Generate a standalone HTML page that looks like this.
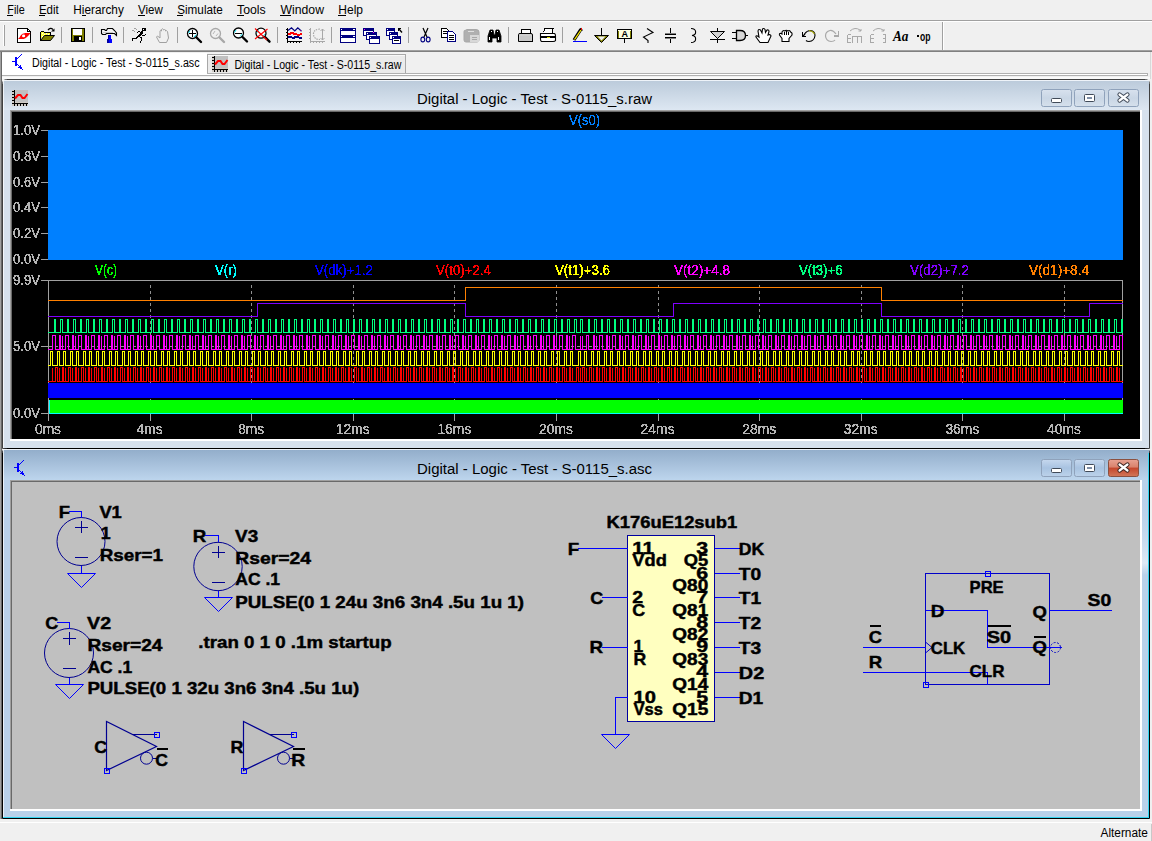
<!DOCTYPE html>
<html><head><meta charset="utf-8"><title>LTspice</title>
<style>html,body{margin:0;padding:0;width:1152px;height:841px;overflow:hidden;background:#f0f0f0} svg{display:block} text{font-family:"Liberation Sans",sans-serif}</style>
</head><body>
<svg width="1152" height="841" viewBox="0 0 1152 841" font-family="Liberation Sans, sans-serif" shape-rendering="crispEdges">
<defs>
<linearGradient id="tbInact" x1="0" y1="0" x2="0" y2="1"><stop offset="0" stop-color="#bccbdb"/><stop offset="1" stop-color="#dde7f2"/></linearGradient>
<linearGradient id="tbAct" x1="0" y1="0" x2="0" y2="1"><stop offset="0" stop-color="#93aecb"/><stop offset="1" stop-color="#bdd5ed"/></linearGradient>
<linearGradient id="btnInact" x1="0" y1="0" x2="0" y2="1"><stop offset="0" stop-color="#d8e2ee"/><stop offset="0.5" stop-color="#c9d6e5"/><stop offset="1" stop-color="#d5e0ec"/></linearGradient>
<linearGradient id="btnAct" x1="0" y1="0" x2="0" y2="1"><stop offset="0" stop-color="#c6d8ee"/><stop offset="0.5" stop-color="#a8c3e1"/><stop offset="1" stop-color="#bcd2ea"/></linearGradient>
<linearGradient id="btnClose" x1="0" y1="0" x2="0" y2="1"><stop offset="0" stop-color="#e8a292"/><stop offset="0.45" stop-color="#d9826c"/><stop offset="0.5" stop-color="#c5462c"/><stop offset="1" stop-color="#d2785a"/></linearGradient>
<filter id="crisp" x="-5%" y="-20%" width="110%" height="140%" color-interpolation-filters="sRGB"><feComponentTransfer><feFuncA type="discrete" tableValues="0 0 0 1 1 1"/></feComponentTransfer></filter>
<linearGradient id="streak" x1="0" y1="0" x2="0" y2="1"><stop offset="0" stop-color="#b9d1ea" stop-opacity="0"/><stop offset="0.85" stop-color="#dde9f5" stop-opacity="1"/><stop offset="1" stop-color="#dde9f5" stop-opacity="0"/></linearGradient>
</defs>
<rect x="0" y="0" width="1152" height="841" fill="#f0f0f0"/>
<text x="7.3" y="14" font-size="12" fill="#000" textLength="17.4" lengthAdjust="spacingAndGlyphs" >File</text>
<text x="38.9" y="14" font-size="12" fill="#000" textLength="19.8" lengthAdjust="spacingAndGlyphs" >Edit</text>
<text x="73.3" y="14" font-size="12" fill="#000" textLength="50.5" lengthAdjust="spacingAndGlyphs" >Hierarchy</text>
<text x="138" y="14" font-size="12" fill="#000" textLength="24.7" lengthAdjust="spacingAndGlyphs" >View</text>
<text x="177.2" y="14" font-size="12" fill="#000" textLength="45.6" lengthAdjust="spacingAndGlyphs" >Simulate</text>
<text x="237" y="14" font-size="12" fill="#000" textLength="28.7" lengthAdjust="spacingAndGlyphs" >Tools</text>
<text x="280.5" y="14" font-size="12" fill="#000" textLength="43.5" lengthAdjust="spacingAndGlyphs" >Window</text>
<text x="338.3" y="14" font-size="12" fill="#000" textLength="24.7" lengthAdjust="spacingAndGlyphs" >Help</text>
<rect x="7" y="15" width="6" height="1" fill="#000"/>
<rect x="39" y="15" width="6" height="1" fill="#000"/>
<rect x="82" y="15" width="4" height="1" fill="#000"/>
<rect x="138" y="15" width="7" height="1" fill="#000"/>
<rect x="177" y="15" width="6" height="1" fill="#000"/>
<rect x="237" y="15" width="7" height="1" fill="#000"/>
<rect x="280" y="15" width="11" height="1" fill="#000"/>
<rect x="338" y="15" width="8" height="1" fill="#000"/>
<rect x="0" y="20" width="1152" height="1" fill="#a0a0a0"/><rect x="0" y="21" width="1152" height="1" fill="#ffffff"/>
<rect x="3" y="25" width="1" height="21" fill="#ffffff"/><rect x="4" y="25" width="1" height="21" fill="#a0a0a0"/>
<rect x="61" y="27" width="1" height="16" fill="#a0a0a0"/>
<rect x="92" y="27" width="1" height="16" fill="#a0a0a0"/>
<rect x="123" y="27" width="1" height="16" fill="#a0a0a0"/>
<rect x="177" y="27" width="1" height="16" fill="#a0a0a0"/>
<rect x="277" y="27" width="1" height="16" fill="#a0a0a0"/>
<rect x="331" y="27" width="1" height="16" fill="#a0a0a0"/>
<rect x="408" y="27" width="1" height="16" fill="#a0a0a0"/>
<rect x="508" y="27" width="1" height="16" fill="#a0a0a0"/>
<rect x="562" y="27" width="1" height="16" fill="#a0a0a0"/>
<rect x="942" y="22" width="1" height="28" fill="#a0a0a0"/><rect x="943" y="22" width="1" height="28" fill="#fff"/>
<path d="M17.5,28.5 H27.5 L30.5,31.5 V42.5 H17.5 Z" fill="#fff" stroke="#000" stroke-width="1.3" />
<path d="M27.5,28.5 V31.5 H30.5" fill="none" stroke="#000" stroke-width="1" />
<path d="M18,39 L19.5,37.5 L21,35 L23,33.5 H24 L25,33 H30.5 L29,35 L27,37 L25,38.5 H24.5 L24,39 Z" fill="#ff0000" stroke="none" stroke-width="1" shape-rendering="geometricPrecision"/>
<ellipse cx="23.6" cy="35.9" rx="1.6" ry="1.3" fill="#fff" shape-rendering="geometricPrecision"/>
<path d="M40.5,40.5 V32.5 L41.5,31.5 H43.5 L44.5,32.5 H50.5 V35.5" fill="#ffff40" stroke="#000" stroke-width="1" />
<rect x="42" y="33" width="1" height="1" fill="#fff"/>
<rect x="44" y="34" width="1" height="1" fill="#fff"/>
<rect x="46" y="33" width="1" height="1" fill="#fff"/>
<rect x="48" y="34" width="1" height="1" fill="#fff"/>
<rect x="42" y="36" width="1" height="1" fill="#fff"/>
<rect x="41" y="38" width="1" height="1" fill="#fff"/>
<path d="M40.5,40.5 L44.5,35.5 H54.5 L50.5,40.5 Z" fill="#808000" stroke="#000" stroke-width="1" shape-rendering="geometricPrecision"/>
<path d="M48,30 Q50.5,27 53,29.5" fill="none" stroke="#000" stroke-width="1.2" shape-rendering="geometricPrecision"/>
<path d="M51,31.5 L54.5,31.5 L54.5,28.5 Z" fill="#000" stroke="none" stroke-width="1" shape-rendering="geometricPrecision"/>
<rect x="71" y="28" width="14" height="14" fill="#000"/>
<rect x="72" y="29" width="12" height="12" fill="#808000"/>
<rect x="73" y="29" width="9" height="6" fill="#fff"/>
<rect x="74" y="36" width="8" height="5" fill="#000"/>
<rect x="79" y="37" width="2" height="3" fill="#fff"/>
<path d="M101.5,29.5 H104.5 L105.5,30.5 H106.5 L107.5,28.5 H112.5 L114.5,30.5 L116.5,33 V35.5 L114.5,33.5 H106.5 L105.5,34.5 H102.5 L101.5,33.5 Z" fill="#f4f4f4" stroke="#000" stroke-width="1.1" shape-rendering="geometricPrecision"/>
<rect x="103" y="32" width="10" height="1" fill="#c8c8c8"/>
<rect x="108" y="35" width="3" height="4" fill="#0000a0"/>
<rect x="109" y="35" width="2" height="4" fill="#0000ff"/>
<rect x="107" y="39" width="5" height="4" fill="#0000a0"/>
<rect x="109" y="39" width="3" height="4" fill="#0000ff"/>
<rect x="142" y="28" width="4" height="3" fill="#000"/>
<rect x="141" y="31" width="2" height="1" fill="#000"/>
<rect x="140" y="32" width="3" height="1" fill="#000"/>
<rect x="140" y="33" width="3" height="1" fill="#000"/>
<rect x="139" y="34" width="3" height="1" fill="#000"/>
<rect x="138" y="35" width="3" height="1" fill="#000"/>
<rect x="137" y="36" width="3" height="1" fill="#000"/>
<rect x="136" y="37" width="2" height="1" fill="#000"/>
<rect x="132" y="38" width="5" height="1" fill="#000"/>
<rect x="132" y="39" width="1" height="2" fill="#000"/>
<rect x="140" y="37" width="2" height="1" fill="#000"/>
<rect x="141" y="38" width="1" height="3" fill="#000"/>
<rect x="140" y="41" width="1" height="2" fill="#000"/>
<rect x="138" y="31" width="2" height="1" fill="#000"/>
<rect x="137" y="32" width="1" height="1" fill="#000"/>
<rect x="142" y="35" width="3" height="1" fill="#000"/>
<rect x="145" y="34" width="1" height="1" fill="#000"/>
<rect x="143" y="29" width="1" height="1" fill="#fff"/>
<rect x="134" y="28" width="2" height="1" fill="#a0a0a0"/>
<rect x="136" y="29" width="1" height="1" fill="#a0a0a0"/>
<rect x="132" y="30" width="2" height="1" fill="#a0a0a0"/>
<rect x="134" y="31" width="1" height="1" fill="#a0a0a0"/>
<path d="M159.5,42.5 L156.5,37 L157.5,36 L160,38 V31 Q160.5,29.5 161.5,31 V29.5 Q162.5,28 163.5,29.5 V30 Q164.5,29 165.5,30 V31 Q166.5,30 167.5,31.5 L168.5,38 L166.5,42.5 Z" fill="none" stroke="#a0a0a0" stroke-width="1" shape-rendering="geometricPrecision"/>
<circle cx="192.5" cy="33.5" r="5" fill="#fff" stroke="#000" stroke-width="1.3" shape-rendering="geometricPrecision"/>
<path d="M188.5,33.0 L190.0,30.5" fill="none" stroke="#00e0f0" stroke-width="1" shape-rendering="geometricPrecision"/>
<path d="M194.0,37.0 L196.3,34.5" fill="none" stroke="#00e0f0" stroke-width="1" shape-rendering="geometricPrecision"/>
<path d="M196.5,37.5 L201.0,42.0" fill="none" stroke="#000" stroke-width="2.4" shape-rendering="geometricPrecision" stroke-linecap="round"/>
<rect x="189" y="33" width="7" height="1" fill="#000"/>
<rect x="192" y="30" width="1" height="7" fill="#000"/>
<circle cx="215.5" cy="33.5" r="5" fill="none" stroke="#a8a8a8" stroke-width="1.3" shape-rendering="geometricPrecision"/>
<path d="M213.0,34.0 L215.0,31.0 M216.0,36.0 L218.0,33.5" fill="none" stroke="#a8a8a8" stroke-width="0.8" shape-rendering="geometricPrecision"/>
<path d="M219.5,37.5 L224.0,42.0" fill="none" stroke="#a8a8a8" stroke-width="2.4" shape-rendering="geometricPrecision" stroke-linecap="round"/>
<circle cx="238.5" cy="33" r="5" fill="#fff" stroke="#000" stroke-width="1.3" shape-rendering="geometricPrecision"/>
<path d="M234.5,32.5 L236.0,30" fill="none" stroke="#00e0f0" stroke-width="1" shape-rendering="geometricPrecision"/>
<path d="M240.0,36.5 L242.3,34" fill="none" stroke="#00e0f0" stroke-width="1" shape-rendering="geometricPrecision"/>
<path d="M242.5,37 L247.0,41.5" fill="none" stroke="#000" stroke-width="2.4" shape-rendering="geometricPrecision" stroke-linecap="round"/>
<rect x="235" y="33" width="7" height="1" fill="#000"/>
<circle cx="261" cy="33.2" r="5" fill="#fff" stroke="#000" stroke-width="1.3" shape-rendering="geometricPrecision"/>
<path d="M257,32.7 L258.5,30.200000000000003" fill="none" stroke="#00e0f0" stroke-width="1" shape-rendering="geometricPrecision"/>
<path d="M262.5,36.7 L264.8,34.2" fill="none" stroke="#00e0f0" stroke-width="1" shape-rendering="geometricPrecision"/>
<path d="M265,37.2 L269.5,41.7" fill="none" stroke="#000" stroke-width="2.4" shape-rendering="geometricPrecision" stroke-linecap="round"/>
<path d="M255,28.5 L267,40 M267.5,29 L255,39" fill="none" stroke="#ff0000" stroke-width="1.1" shape-rendering="geometricPrecision"/>
<rect x="287" y="28" width="1" height="15" fill="#000"/>
<rect x="287" y="41" width="15" height="1" fill="#000"/>
<rect x="286" y="29" width="1" height="1" fill="#000"/>
<rect x="286" y="32" width="1" height="1" fill="#000"/>
<rect x="286" y="35" width="1" height="1" fill="#000"/>
<rect x="286" y="38" width="1" height="1" fill="#000"/>
<rect x="287" y="42" width="1" height="1" fill="#000"/>
<rect x="290" y="42" width="1" height="1" fill="#000"/>
<rect x="293" y="42" width="1" height="1" fill="#000"/>
<rect x="296" y="42" width="1" height="1" fill="#000"/>
<rect x="299" y="42" width="1" height="1" fill="#000"/>
<path d="M288,30.5 L291.5,27.8 L294.8,31 L297.8,27.8 L301.5,31.2" fill="none" stroke="#000080" stroke-width="1.2" shape-rendering="geometricPrecision"/>
<rect x="300" y="30" width="1" height="1" fill="#800080"/>
<rect x="288" y="33" width="3" height="2" fill="#ff0000"/>
<rect x="290" y="32" width="4" height="2" fill="#ff0000"/>
<rect x="293" y="33" width="4" height="2" fill="#ff0000"/>
<rect x="297" y="34" width="3" height="2" fill="#ff0000"/>
<rect x="300" y="33" width="2" height="2" fill="#ff0000"/>
<rect x="288" y="36" width="4" height="2" fill="#000080"/>
<rect x="292" y="37" width="3" height="2" fill="#000080"/>
<rect x="294" y="36" width="5" height="2" fill="#000080"/>
<rect x="299" y="37" width="3" height="2" fill="#000080"/>
<rect x="310" y="28" width="1" height="15" fill="#a8a8a8"/>
<rect x="310" y="41" width="15" height="1" fill="#a8a8a8"/>
<rect x="309" y="29" width="1" height="1" fill="#a8a8a8"/>
<rect x="309" y="32" width="1" height="1" fill="#a8a8a8"/>
<rect x="309" y="35" width="1" height="1" fill="#a8a8a8"/>
<rect x="309" y="38" width="1" height="1" fill="#a8a8a8"/>
<rect x="313" y="42" width="1" height="1" fill="#a8a8a8"/>
<rect x="316" y="42" width="1" height="1" fill="#a8a8a8"/>
<rect x="319" y="42" width="1" height="1" fill="#a8a8a8"/>
<rect x="322" y="42" width="1" height="1" fill="#a8a8a8"/>
<path d="M320,29 Q313,29.5 313.5,34.5 Q314,39.5 320,39.5" fill="none" stroke="#a8a8a8" stroke-width="1.2" shape-rendering="geometricPrecision" stroke-dasharray="1.5,1"/>
<rect x="322" y="29" width="1" height="11" fill="#a8a8a8"/>
<path d="M320.5,31 L322.5,29 L324.5,31 M320.5,38 L322.5,40 L324.5,38" fill="none" stroke="#a8a8a8" stroke-width="1" shape-rendering="geometricPrecision"/>
<rect x="340" y="28" width="16" height="15" fill="#000080"/>
<rect x="341" y="31" width="14" height="4" fill="#fff"/>
<rect x="341" y="38" width="14" height="4" fill="#fff"/>
<rect x="341" y="29" width="1" height="1" fill="#fff"/>
<rect x="353" y="29" width="1" height="1" fill="#fff"/>
<rect x="354" y="29" width="1" height="1" fill="#fff"/>
<rect x="341" y="36" width="1" height="1" fill="#fff"/>
<rect x="353" y="36" width="1" height="1" fill="#fff"/>
<rect x="354" y="36" width="1" height="1" fill="#fff"/>
<rect x="363" y="28" width="11" height="8" fill="#000080"/>
<rect x="364" y="31" width="9" height="4" fill="#fff"/>
<rect x="364" y="29" width="1" height="1" fill="#fff"/>
<rect x="366" y="32" width="11" height="8" fill="#000080"/>
<rect x="367" y="35" width="9" height="4" fill="#fff"/>
<rect x="367" y="33" width="1" height="1" fill="#fff"/>
<rect x="369" y="36" width="11" height="8" fill="#000080"/>
<rect x="370" y="39" width="9" height="4" fill="#fff"/>
<rect x="370" y="37" width="1" height="1" fill="#fff"/>
<rect x="364" y="29" width="1" height="1" fill="#ff00ff"/>
<rect x="373" y="32" width="1" height="1" fill="#ff00ff"/>
<rect x="386" y="28" width="9" height="8" fill="#000080"/>
<rect x="387" y="31" width="7" height="4" fill="#fff"/>
<rect x="387" y="29" width="1" height="1" fill="#fff"/>
<rect x="389" y="32" width="9" height="8" fill="#000080"/>
<rect x="390" y="35" width="7" height="4" fill="#fff"/>
<rect x="390" y="33" width="1" height="1" fill="#fff"/>
<rect x="392" y="36" width="9" height="8" fill="#000080"/>
<rect x="393" y="39" width="7" height="4" fill="#fff"/>
<rect x="393" y="37" width="1" height="1" fill="#fff"/>
<rect x="394" y="40" width="5" height="1" fill="#000"/>
<rect x="398" y="28" width="3" height="1" fill="#000"/>
<rect x="398" y="28" width="1" height="3" fill="#000"/>
<path d="M398.5,28.5 L402,32.5" fill="none" stroke="#000" stroke-width="1.3" shape-rendering="geometricPrecision"/>
<path d="M423,28 L427,37 M428,28 L424,37" fill="none" stroke="#000" stroke-width="1.2" shape-rendering="geometricPrecision"/>
<ellipse cx="422.8" cy="39.5" rx="1.9" ry="2.4" fill="none" stroke="#000080" stroke-width="1.1" shape-rendering="geometricPrecision"/>
<ellipse cx="428.2" cy="39.5" rx="1.9" ry="2.4" fill="none" stroke="#000080" stroke-width="1.1" shape-rendering="geometricPrecision"/>
<path d="M441.5,28.5 H446.5 L448.5,30.5 V37.5 H441.5 Z" fill="#fff" stroke="#000" stroke-width="1" />
<rect x="443" y="31" width="4" height="1" fill="#000"/>
<rect x="443" y="33" width="4" height="1" fill="#000"/>
<path d="M447.5,31.5 H452.5 L455.5,34.5 V41.5 H447.5 Z" fill="#fff" stroke="#000080" stroke-width="1" />
<rect x="449" y="35" width="5" height="1" fill="#000"/>
<rect x="449" y="37" width="5" height="1" fill="#000"/>
<rect x="449" y="39" width="5" height="1" fill="#000"/>
<path d="M465,30.5 Q464,30 464,32 V40 Q464,42 466,42 H477 Q479,42 479,40 V32 Q479,29.5 476,29.5 H467 Z" fill="#b0b0b0" stroke="#a8a8a8" stroke-width="1" shape-rendering="geometricPrecision"/>
<rect x="468" y="31" width="6" height="1" fill="#e0e0e0"/>
<rect x="470" y="35" width="9" height="7" fill="#d8d8d8"/>
<rect x="472" y="37" width="5" height="1" fill="#a8a8a8"/>
<rect x="472" y="39" width="5" height="1" fill="#a8a8a8"/>
<path d="M488,42 V36 L490,30 H493 L494,35 H495 L496,30 H499 L501,36 V42 H497 V38 H492 V42 Z" fill="#000" stroke="#000" stroke-width="0.8" shape-rendering="geometricPrecision"/>
<rect x="489" y="37" width="1" height="3" fill="#fff"/>
<rect x="498" y="37" width="1" height="3" fill="#fff"/>
<rect x="491" y="31" width="1" height="1" fill="#fff"/>
<rect x="497" y="31" width="1" height="1" fill="#fff"/>
<path d="M521.5,33.5 V29.5 H530.5 V33.5" fill="#fff" stroke="#000" stroke-width="1" />
<path d="M518.5,34.5 Q518.5,33.5 520,33.5 H531 Q532.5,33.5 532.5,35 V41.5 H518.5 Z" fill="#d0d0d0" stroke="#000" stroke-width="1" shape-rendering="geometricPrecision"/>
<rect x="520" y="36" width="11" height="5" fill="#c8c8c8"/>
<rect x="519" y="41" width="14" height="1" fill="#000"/>
<path d="M543.5,32.5 L545,28.5 H553 L552,32.5" fill="#fff" stroke="#000" stroke-width="1" />
<path d="M540.5,33.5 H554.5 Q555.5,34 555.5,36 V40.5 Q555,41.5 553,41.5 H541.5 Q540.5,41 540.5,39 Z" fill="#fff" stroke="#000" stroke-width="1.1" shape-rendering="geometricPrecision"/>
<rect x="541" y="36" width="14" height="2" fill="#000"/>
<rect x="547" y="37" width="3" height="1" fill="#e0e000"/>
<path d="M574,40 L580.5,30 L582,29" fill="none" stroke="#000" stroke-width="3.2" shape-rendering="geometricPrecision"/>
<path d="M574.5,39.5 L581,30" fill="none" stroke="#ffee00" stroke-width="1.3" shape-rendering="geometricPrecision"/>
<rect x="581" y="28" width="1" height="2" fill="#ff0000"/>
<rect x="573" y="41" width="14" height="1" fill="#0000ff"/>
<rect x="601" y="28" width="1" height="7" fill="#000"/>
<path d="M594.5,35.5 H608.5 L601.5,42.5 Z" fill="#808000" stroke="#000" stroke-width="1" shape-rendering="geometricPrecision"/>
<path d="M597.5,36.5 H605.5 L601.5,40.5 Z" fill="#f0f0f0" stroke="none" stroke-width="1" shape-rendering="geometricPrecision"/>
<path d="M617.5,29.5 H631.5 V38.5 H617.5 Z" fill="#ffffe0" stroke="#000" stroke-width="1" />
<path d="M618.5,30.5 V37.5 M630.5,30.5 V37.5" fill="none" stroke="#808000" stroke-width="1" />
<rect x="624" y="39" width="1" height="4" fill="#000"/>
<text x="621.5" y="37" font-size="9" font-weight="bold" fill="#000">A</text>
<path d="M647,28.5 L653,32.5 L643.5,37 L648,40.5 V43" fill="none" stroke="#000" stroke-width="1.1" shape-rendering="geometricPrecision"/>
<rect x="670" y="28" width="1" height="6" fill="#000"/>
<rect x="670" y="38" width="1" height="5" fill="#000"/>
<rect x="665" y="34" width="11" height="1" fill="#000"/>
<rect x="665" y="37" width="11" height="1" fill="#000"/>
<rect x="665" y="33" width="11" height="1" fill="#808080"/>
<rect x="665" y="38" width="11" height="1" fill="#808080"/>
<path d="M691,28.5 C697,28.5 697,35 692,35.5 C697,36 697,42.5 691,42.5" fill="none" stroke="#000" stroke-width="1.1" shape-rendering="geometricPrecision"/>
<rect x="717" y="28" width="1" height="15" fill="#000"/>
<path d="M710.5,31.5 H724.5 L717.5,38.5 Z" fill="#d0d0d0" stroke="#000" stroke-width="1" shape-rendering="geometricPrecision"/>
<rect x="710" y="39" width="15" height="1" fill="#000"/>
<path d="M736.5,30.5 H740 Q745.5,30.5 745.5,35.5 Q745.5,40.5 740,40.5 H736.5 Z" fill="#d8d8d8" stroke="#000" stroke-width="1.3" shape-rendering="geometricPrecision"/>
<rect x="732" y="32" width="5" height="1" fill="#000"/>
<rect x="732" y="38" width="5" height="1" fill="#000"/>
<rect x="745" y="35" width="3" height="1" fill="#000"/>
<path d="M760,42.5 L756,37 Q755.5,35.5 757.5,36 L759,37 L758,31 Q758.5,28.5 760.5,30 L762,33 L762.5,29 Q764,27.8 765,29.5 L765.5,32.5 L767,30 Q769,29.5 769,31.5 L768,35 Q770.5,34 771,36 L768,42.5 Z" fill="#fff" stroke="#000" stroke-width="1.1" shape-rendering="geometricPrecision"/>
<path d="M782,41.5 V38.5 L779.5,35 Q779,33 781,33.5 L782,34 V32 Q783,30 785,31 Q786,29.5 788,31 Q790,30 790.5,32 Q792.5,32.5 792,35 L789,38.5 V41.5 Z" fill="#fff" stroke="#000" stroke-width="1.1" shape-rendering="geometricPrecision"/>
<rect x="784" y="32" width="1" height="3" fill="#000"/>
<rect x="786" y="31" width="1" height="4" fill="#000"/>
<rect x="788" y="32" width="1" height="3" fill="#000"/>
<path d="M804.5,34 Q807,30.5 810.5,30.5 Q815,31 815,35.5 Q814.5,41 809,41.5 Q807,41.5 806,40.5" fill="none" stroke="#000" stroke-width="1.1" shape-rendering="geometricPrecision"/>
<path d="M809,30.5 Q813,31 814.5,34" fill="none" stroke="#a0a000" stroke-width="1.1" shape-rendering="geometricPrecision"/>
<path d="M802.5,31.5 V36.5 H806" fill="none" stroke="#000" stroke-width="1.3" />
<path d="M802.5,36.5 L805,34" fill="none" stroke="#000" stroke-width="1.3" shape-rendering="geometricPrecision"/>
<path d="M836,34 Q833,30 830,30.5 Q825.5,31.5 825.5,36 Q826,41 831,41.5 Q834,41.5 835,40" fill="none" stroke="#a8a8a8" stroke-width="1.2" shape-rendering="geometricPrecision"/>
<path d="M838.5,31 V36 H834" fill="none" stroke="#a8a8a8" stroke-width="1.4" />
<path d="M847.5,34.5 H850.5 M847.5,34.5 V42.5 H850.5 M847.5,38.5 H850.5 M852.5,42.5 V36.5 H861.5 V42.5 M857,36.5 V42.5" fill="none" stroke="#a8a8a8" stroke-width="1" />
<path d="M850,31 Q855,26.5 860,30 L861,31 M858.5,31 H861 V29" fill="none" stroke="#a8a8a8" stroke-width="1" shape-rendering="geometricPrecision"/>
<path d="M870.5,34.5 H873.5 M870.5,34.5 V42.5 H873.5 M870.5,38.5 H873.5 M882.5,34.5 H885.5 V42.5 H882.5 M882.5,38.5 H885.5" fill="none" stroke="#a8a8a8" stroke-width="1" />
<path d="M873,31 Q878,26.5 883,30 L884,31 M881.5,31 H884 V29" fill="none" stroke="#a8a8a8" stroke-width="1" shape-rendering="geometricPrecision"/>
<text x="893" y="41.2" style="font-family:Liberation Serif" font-size="14" font-weight="bold" font-style="italic" fill="#000" textLength="15.5" lengthAdjust="spacingAndGlyphs">Aa</text>
<rect x="917" y="35" width="2" height="2" fill="#000"/>
<text x="920" y="40.5" font-size="12.5" font-weight="bold" fill="#000" textLength="10.5" lengthAdjust="spacingAndGlyphs">op</text>
<rect x="0" y="50" width="1152" height="1" fill="#a0a0a0"/><rect x="0" y="51" width="1152" height="1" fill="#808080"/>
<rect x="0" y="52" width="1152" height="1" fill="#f0f0f0"/>
<rect x="2" y="53" width="205" height="22" fill="#ffffff"/>
<text x="32" y="67.3" font-size="12" fill="#000" textLength="167.5" lengthAdjust="spacingAndGlyphs" >Digital - Logic - Test - S-0115_s.asc</text>
<rect x="207" y="54" width="199" height="20" fill="#a8a8a8"/><rect x="208" y="55" width="197" height="18" fill="#ebebeb"/>
<rect x="208" y="55" width="197" height="1" fill="#f8f8f8"/><rect x="207" y="53" width="199" height="1" fill="#f4f4f4"/>
<text x="234.4" y="69" font-size="12" fill="#000" textLength="167" lengthAdjust="spacingAndGlyphs" >Digital - Logic - Test - S-0115_s.raw</text>
<rect x="207" y="73" width="941" height="1" fill="#b0b0b0"/><rect x="207" y="74" width="941" height="1" fill="#ffffff"/><rect x="2" y="75" width="1146" height="1" fill="#b0b0b0"/><rect x="1147" y="73" width="1" height="3" fill="#b0b0b0"/>
<rect x="2" y="76" width="1148" height="1" fill="#f0f0f0"/><rect x="2" y="77" width="1148" height="2" fill="#fafafa"/><rect x="1150" y="52" width="1" height="27" fill="#d8d8d8"/>
<rect x="0" y="52" width="1" height="767" fill="#a0a0a0"/><rect x="1" y="52" width="1" height="767" fill="#696969"/>
<path d="M2.5,448.5 V83.5 Q2.5,79.5 6.5,79.5 H1145.5 Q1149.5,79.5 1149.5,83.5 V448.5 Z" fill="#d6e1ed" stroke="#404040" stroke-width="1" shape-rendering="geometricPrecision"/>
<rect x="3" y="80" width="1146" height="1" fill="#eef3f9"/>
<rect x="3" y="81" width="1146" height="29" fill="url(#tbInact)"/>
<rect x="3" y="80" width="1" height="368" fill="#ffffff" opacity="0.7"/>
<text x="417" y="103.6" font-size="14" fill="#000" textLength="235" lengthAdjust="spacingAndGlyphs" >Digital - Logic - Test - S-0115_s.raw</text>
<rect x="1041.5" y="89.5" width="30" height="17" rx="2" fill="url(#btnInact)" stroke="#8fa2bb" shape-rendering="geometricPrecision"/>
<rect x="1074.5" y="89.5" width="30" height="17" rx="2" fill="url(#btnInact)" stroke="#8fa2bb" shape-rendering="geometricPrecision"/>
<rect x="1108.5" y="89.5" width="30" height="17" rx="2" fill="url(#btnInact)" stroke="#8fa2bb" shape-rendering="geometricPrecision"/>
<rect x="1051.5" y="98.5" width="10" height="4" rx="1" fill="#fff" stroke="#404a58" shape-rendering="geometricPrecision"/>
<rect x="1084.5" y="94.5" width="10" height="7" rx="1" fill="#fff" stroke="#404a58" shape-rendering="geometricPrecision"/><rect x="1087" y="97" width="5" height="2" fill="#8090a8"/>
<path d="M1119.5,94.5 L1127.5,100.5 M1127.5,94.5 L1119.5,100.5" stroke="#404a58" stroke-width="4.2" stroke-linecap="round" shape-rendering="geometricPrecision"/><path d="M1119.5,94.5 L1127.5,100.5 M1127.5,94.5 L1119.5,100.5" stroke="#fff" stroke-width="2.2" stroke-linecap="round" shape-rendering="geometricPrecision"/>
<rect x="10" y="110" width="1132" height="331" fill="#ffffff"/>
<rect x="10" y="110" width="1130" height="1" fill="#a0a0a0"/><rect x="10" y="110" width="1" height="329" fill="#a0a0a0"/>
<rect x="11" y="111" width="1129" height="1" fill="#696969"/><rect x="11" y="111" width="1" height="328" fill="#696969"/>
<rect x="12" y="112" width="1128" height="327" fill="#000"/>
<text x="13" y="135" font-size="14.5" fill="#b4b4b4" textLength="27" lengthAdjust="spacingAndGlyphs" stroke="#b4b4b4" stroke-width="0.3" filter="url(#crisp)">1.0V</text>
<rect x="41" y="130" width="7" height="1" fill="#a0a0a0"/>
<text x="13" y="161" font-size="14.5" fill="#b4b4b4" textLength="27" lengthAdjust="spacingAndGlyphs" stroke="#b4b4b4" stroke-width="0.3" filter="url(#crisp)">0.8V</text>
<rect x="41" y="156" width="7" height="1" fill="#a0a0a0"/>
<text x="13" y="187" font-size="14.5" fill="#b4b4b4" textLength="27" lengthAdjust="spacingAndGlyphs" stroke="#b4b4b4" stroke-width="0.3" filter="url(#crisp)">0.6V</text>
<rect x="41" y="182" width="7" height="1" fill="#a0a0a0"/>
<text x="13" y="212" font-size="14.5" fill="#b4b4b4" textLength="27" lengthAdjust="spacingAndGlyphs" stroke="#b4b4b4" stroke-width="0.3" filter="url(#crisp)">0.4V</text>
<rect x="41" y="207" width="7" height="1" fill="#a0a0a0"/>
<text x="13" y="238" font-size="14.5" fill="#b4b4b4" textLength="27" lengthAdjust="spacingAndGlyphs" stroke="#b4b4b4" stroke-width="0.3" filter="url(#crisp)">0.2V</text>
<rect x="41" y="233" width="7" height="1" fill="#a0a0a0"/>
<text x="13" y="264" font-size="14.5" fill="#b4b4b4" textLength="27" lengthAdjust="spacingAndGlyphs" stroke="#b4b4b4" stroke-width="0.3" filter="url(#crisp)">0.0V</text>
<rect x="41" y="259" width="7" height="1" fill="#a0a0a0"/>
<rect x="48" y="130" width="1075" height="130" fill="#0080ff"/>
<text x="569" y="125" font-size="14.5" fill="#0080ff" textLength="31" lengthAdjust="spacingAndGlyphs" stroke="#0080ff" stroke-width="0.3" filter="url(#crisp)">V(s0)</text>
<text x="13" y="285" font-size="14.5" fill="#b4b4b4" textLength="27" lengthAdjust="spacingAndGlyphs" stroke="#b4b4b4" stroke-width="0.3" filter="url(#crisp)">9.9V</text>
<rect x="41" y="280" width="7" height="1" fill="#a0a0a0"/>
<text x="13" y="351" font-size="14.5" fill="#b4b4b4" textLength="27" lengthAdjust="spacingAndGlyphs" stroke="#b4b4b4" stroke-width="0.3" filter="url(#crisp)">5.0V</text>
<rect x="41" y="346" width="7" height="1" fill="#a0a0a0"/>
<text x="13" y="418" font-size="14.5" fill="#b4b4b4" textLength="27" lengthAdjust="spacingAndGlyphs" stroke="#b4b4b4" stroke-width="0.3" filter="url(#crisp)">0.0V</text>
<rect x="41" y="413" width="7" height="1" fill="#a0a0a0"/>
<rect x="48" y="280" width="1075" height="1" fill="#a0a0a0"/>
<rect x="1122" y="280" width="1" height="134" fill="#a0a0a0"/>
<rect x="48" y="280" width="1" height="141" fill="#a0a0a0"/>
<line x1="150.5" y1="285" x2="150.5" y2="413" stroke="#909090" stroke-dasharray="3,3"/>
<rect x="150" y="413" width="1" height="8" fill="#a0a0a0"/>
<line x1="251.5" y1="285" x2="251.5" y2="413" stroke="#909090" stroke-dasharray="3,3"/>
<rect x="251" y="413" width="1" height="8" fill="#a0a0a0"/>
<line x1="353.5" y1="285" x2="353.5" y2="413" stroke="#909090" stroke-dasharray="3,3"/>
<rect x="353" y="413" width="1" height="8" fill="#a0a0a0"/>
<line x1="454.5" y1="285" x2="454.5" y2="413" stroke="#909090" stroke-dasharray="3,3"/>
<rect x="454" y="413" width="1" height="8" fill="#a0a0a0"/>
<line x1="556.5" y1="285" x2="556.5" y2="413" stroke="#909090" stroke-dasharray="3,3"/>
<rect x="556" y="413" width="1" height="8" fill="#a0a0a0"/>
<line x1="658.5" y1="285" x2="658.5" y2="413" stroke="#909090" stroke-dasharray="3,3"/>
<rect x="658" y="413" width="1" height="8" fill="#a0a0a0"/>
<line x1="759.5" y1="285" x2="759.5" y2="413" stroke="#909090" stroke-dasharray="3,3"/>
<rect x="759" y="413" width="1" height="8" fill="#a0a0a0"/>
<line x1="861.5" y1="285" x2="861.5" y2="413" stroke="#909090" stroke-dasharray="3,3"/>
<rect x="861" y="413" width="1" height="8" fill="#a0a0a0"/>
<line x1="962.5" y1="285" x2="962.5" y2="413" stroke="#909090" stroke-dasharray="3,3"/>
<rect x="962" y="413" width="1" height="8" fill="#a0a0a0"/>
<line x1="1064.5" y1="285" x2="1064.5" y2="413" stroke="#909090" stroke-dasharray="3,3"/>
<rect x="1064" y="413" width="1" height="8" fill="#a0a0a0"/>
<line x1="49" y1="346.5" x2="1122" y2="346.5" stroke="#909090" stroke-dasharray="3,3"/>
<rect x="48" y="413" width="1" height="8" fill="#a0a0a0"/>
<text x="35.0" y="434" font-size="14.5" fill="#b4b4b4" textLength="26" lengthAdjust="spacingAndGlyphs" stroke="#b4b4b4" stroke-width="0.3" filter="url(#crisp)">0ms</text>
<text x="136.6" y="434" font-size="14.5" fill="#b4b4b4" textLength="26" lengthAdjust="spacingAndGlyphs" stroke="#b4b4b4" stroke-width="0.3" filter="url(#crisp)">4ms</text>
<text x="238.2" y="434" font-size="14.5" fill="#b4b4b4" textLength="26" lengthAdjust="spacingAndGlyphs" stroke="#b4b4b4" stroke-width="0.3" filter="url(#crisp)">8ms</text>
<text x="335.8" y="434" font-size="14.5" fill="#b4b4b4" textLength="34" lengthAdjust="spacingAndGlyphs" stroke="#b4b4b4" stroke-width="0.3" filter="url(#crisp)">12ms</text>
<text x="437.4" y="434" font-size="14.5" fill="#b4b4b4" textLength="34" lengthAdjust="spacingAndGlyphs" stroke="#b4b4b4" stroke-width="0.3" filter="url(#crisp)">16ms</text>
<text x="539.0" y="434" font-size="14.5" fill="#b4b4b4" textLength="34" lengthAdjust="spacingAndGlyphs" stroke="#b4b4b4" stroke-width="0.3" filter="url(#crisp)">20ms</text>
<text x="640.6" y="434" font-size="14.5" fill="#b4b4b4" textLength="34" lengthAdjust="spacingAndGlyphs" stroke="#b4b4b4" stroke-width="0.3" filter="url(#crisp)">24ms</text>
<text x="742.2" y="434" font-size="14.5" fill="#b4b4b4" textLength="34" lengthAdjust="spacingAndGlyphs" stroke="#b4b4b4" stroke-width="0.3" filter="url(#crisp)">28ms</text>
<text x="843.8" y="434" font-size="14.5" fill="#b4b4b4" textLength="34" lengthAdjust="spacingAndGlyphs" stroke="#b4b4b4" stroke-width="0.3" filter="url(#crisp)">32ms</text>
<text x="945.4" y="434" font-size="14.5" fill="#b4b4b4" textLength="34" lengthAdjust="spacingAndGlyphs" stroke="#b4b4b4" stroke-width="0.3" filter="url(#crisp)">36ms</text>
<text x="1047.0" y="434" font-size="14.5" fill="#b4b4b4" textLength="34" lengthAdjust="spacingAndGlyphs" stroke="#b4b4b4" stroke-width="0.3" filter="url(#crisp)">40ms</text>
<text x="95" y="275" font-size="14.5" fill="#00ff00" textLength="22" lengthAdjust="spacingAndGlyphs" stroke="#00ff00" stroke-width="0.3" filter="url(#crisp)">V(c)</text>
<text x="215" y="275" font-size="14.5" fill="#00ffff" textLength="22" lengthAdjust="spacingAndGlyphs" stroke="#00ffff" stroke-width="0.3" filter="url(#crisp)">V(r)</text>
<text x="315" y="275" font-size="14.5" fill="#0000ff" textLength="58" lengthAdjust="spacingAndGlyphs" stroke="#0000ff" stroke-width="0.3" filter="url(#crisp)">V(dk)+1.2</text>
<text x="436" y="275" font-size="14.5" fill="#ff0000" textLength="55" lengthAdjust="spacingAndGlyphs" stroke="#ff0000" stroke-width="0.3" filter="url(#crisp)">V(t0)+2.4</text>
<text x="555" y="275" font-size="14.5" fill="#ffff00" textLength="55" lengthAdjust="spacingAndGlyphs" stroke="#ffff00" stroke-width="0.3" filter="url(#crisp)">V(t1)+3.6</text>
<text x="674" y="275" font-size="14.5" fill="#ff00ff" textLength="56" lengthAdjust="spacingAndGlyphs" stroke="#ff00ff" stroke-width="0.3" filter="url(#crisp)">V(t2)+4.8</text>
<text x="799" y="275" font-size="14.5" fill="#00ff80" textLength="43.5" lengthAdjust="spacingAndGlyphs" stroke="#00ff80" stroke-width="0.3" filter="url(#crisp)">V(t3)+6</text>
<text x="910" y="275" font-size="14.5" fill="#8000ff" textLength="59" lengthAdjust="spacingAndGlyphs" stroke="#8000ff" stroke-width="0.3" filter="url(#crisp)">V(d2)+7.2</text>
<text x="1029" y="275" font-size="14.5" fill="#ff8000" textLength="60" lengthAdjust="spacingAndGlyphs" stroke="#ff8000" stroke-width="0.3" filter="url(#crisp)">V(d1)+8.4</text>
<rect x="49" y="400" width="1074" height="13" fill="#00ff00"/>
<path d="M49.5,400 V413.5 H1123" fill="none" stroke="#00ffff"/>
<rect x="48" y="383" width="1075" height="15" fill="#0000ff"/>
<path d="M48,381.5 H52.5 V367.5 H52.5 V381.5 H55.5 V367.5 H57.5 V381.5 H59.5 V367.5 H59.5 V381.5 H62.5 V367.5 H63.5 V381.5 H65.5 V367.5 H65.5 V381.5 H68.5 V367.5 H70.5 V381.5 H72.5 V367.5 H72.5 V381.5 H75.5 V367.5 H76.5 V381.5 H78.5 V367.5 H78.5 V381.5 H81.5 V367.5 H83.5 V381.5 H85.5 V367.5 H85.5 V381.5 H88.5 V367.5 H89.5 V381.5 H91.5 V367.5 H91.5 V381.5 H94.5 V367.5 H96.5 V381.5 H98.5 V367.5 H98.5 V381.5 H101.5 V367.5 H102.5 V381.5 H104.5 V367.5 H104.5 V381.5 H107.5 V367.5 H109.5 V381.5 H111.5 V367.5 H111.5 V381.5 H114.5 V367.5 H115.5 V381.5 H117.5 V367.5 H117.5 V381.5 H120.5 V367.5 H122.5 V381.5 H124.5 V367.5 H124.5 V381.5 H127.5 V367.5 H128.5 V381.5 H130.5 V367.5 H130.5 V381.5 H133.5 V367.5 H135.5 V381.5 H137.5 V367.5 H137.5 V381.5 H140.5 V367.5 H141.5 V381.5 H143.5 V367.5 H143.5 V381.5 H146.5 V367.5 H148.5 V381.5 H150.5 V367.5 H150.5 V381.5 H153.5 V367.5 H154.5 V381.5 H156.5 V367.5 H156.5 V381.5 H159.5 V367.5 H161.5 V381.5 H163.5 V367.5 H163.5 V381.5 H166.5 V367.5 H167.5 V381.5 H169.5 V367.5 H169.5 V381.5 H172.5 V367.5 H174.5 V381.5 H176.5 V367.5 H176.5 V381.5 H179.5 V367.5 H180.5 V381.5 H182.5 V367.5 H182.5 V381.5 H185.5 V367.5 H187.5 V381.5 H189.5 V367.5 H189.5 V381.5 H192.5 V367.5 H193.5 V381.5 H195.5 V367.5 H195.5 V381.5 H198.5 V367.5 H200.5 V381.5 H202.5 V367.5 H202.5 V381.5 H205.5 V367.5 H206.5 V381.5 H208.5 V367.5 H208.5 V381.5 H211.5 V367.5 H213.5 V381.5 H215.5 V367.5 H215.5 V381.5 H218.5 V367.5 H219.5 V381.5 H221.5 V367.5 H221.5 V381.5 H224.5 V367.5 H226.5 V381.5 H228.5 V367.5 H228.5 V381.5 H231.5 V367.5 H232.5 V381.5 H234.5 V367.5 H234.5 V381.5 H237.5 V367.5 H239.5 V381.5 H241.5 V367.5 H241.5 V381.5 H244.5 V367.5 H245.5 V381.5 H247.5 V367.5 H247.5 V381.5 H250.5 V367.5 H252.5 V381.5 H254.5 V367.5 H254.5 V381.5 H257.5 V367.5 H258.5 V381.5 H260.5 V367.5 H260.5 V381.5 H263.5 V367.5 H265.5 V381.5 H267.5 V367.5 H267.5 V381.5 H270.5 V367.5 H271.5 V381.5 H273.5 V367.5 H273.5 V381.5 H276.5 V367.5 H278.5 V381.5 H280.5 V367.5 H280.5 V381.5 H283.5 V367.5 H284.5 V381.5 H286.5 V367.5 H286.5 V381.5 H289.5 V367.5 H291.5 V381.5 H293.5 V367.5 H293.5 V381.5 H296.5 V367.5 H297.5 V381.5 H299.5 V367.5 H299.5 V381.5 H302.5 V367.5 H304.5 V381.5 H306.5 V367.5 H306.5 V381.5 H309.5 V367.5 H310.5 V381.5 H312.5 V367.5 H312.5 V381.5 H315.5 V367.5 H317.5 V381.5 H319.5 V367.5 H319.5 V381.5 H322.5 V367.5 H323.5 V381.5 H325.5 V367.5 H325.5 V381.5 H328.5 V367.5 H330.5 V381.5 H332.5 V367.5 H332.5 V381.5 H335.5 V367.5 H336.5 V381.5 H338.5 V367.5 H338.5 V381.5 H341.5 V367.5 H343.5 V381.5 H345.5 V367.5 H345.5 V381.5 H348.5 V367.5 H349.5 V381.5 H351.5 V367.5 H351.5 V381.5 H354.5 V367.5 H356.5 V381.5 H358.5 V367.5 H358.5 V381.5 H361.5 V367.5 H362.5 V381.5 H364.5 V367.5 H364.5 V381.5 H367.5 V367.5 H369.5 V381.5 H371.5 V367.5 H371.5 V381.5 H374.5 V367.5 H375.5 V381.5 H377.5 V367.5 H377.5 V381.5 H380.5 V367.5 H382.5 V381.5 H384.5 V367.5 H384.5 V381.5 H387.5 V367.5 H388.5 V381.5 H390.5 V367.5 H390.5 V381.5 H393.5 V367.5 H395.5 V381.5 H397.5 V367.5 H397.5 V381.5 H400.5 V367.5 H401.5 V381.5 H403.5 V367.5 H403.5 V381.5 H406.5 V367.5 H408.5 V381.5 H410.5 V367.5 H410.5 V381.5 H413.5 V367.5 H414.5 V381.5 H416.5 V367.5 H416.5 V381.5 H419.5 V367.5 H421.5 V381.5 H423.5 V367.5 H423.5 V381.5 H426.5 V367.5 H427.5 V381.5 H429.5 V367.5 H429.5 V381.5 H432.5 V367.5 H434.5 V381.5 H436.5 V367.5 H436.5 V381.5 H439.5 V367.5 H440.5 V381.5 H442.5 V367.5 H442.5 V381.5 H445.5 V367.5 H447.5 V381.5 H449.5 V367.5 H449.5 V381.5 H452.5 V367.5 H453.5 V381.5 H455.5 V367.5 H455.5 V381.5 H458.5 V367.5 H460.5 V381.5 H462.5 V367.5 H462.5 V381.5 H465.5 V367.5 H466.5 V381.5 H468.5 V367.5 H468.5 V381.5 H471.5 V367.5 H473.5 V381.5 H475.5 V367.5 H475.5 V381.5 H478.5 V367.5 H479.5 V381.5 H481.5 V367.5 H481.5 V381.5 H484.5 V367.5 H486.5 V381.5 H488.5 V367.5 H488.5 V381.5 H491.5 V367.5 H492.5 V381.5 H494.5 V367.5 H494.5 V381.5 H497.5 V367.5 H499.5 V381.5 H501.5 V367.5 H501.5 V381.5 H504.5 V367.5 H505.5 V381.5 H507.5 V367.5 H507.5 V381.5 H510.5 V367.5 H512.5 V381.5 H514.5 V367.5 H514.5 V381.5 H517.5 V367.5 H518.5 V381.5 H520.5 V367.5 H520.5 V381.5 H523.5 V367.5 H525.5 V381.5 H527.5 V367.5 H527.5 V381.5 H530.5 V367.5 H531.5 V381.5 H533.5 V367.5 H533.5 V381.5 H536.5 V367.5 H538.5 V381.5 H540.5 V367.5 H540.5 V381.5 H543.5 V367.5 H544.5 V381.5 H546.5 V367.5 H546.5 V381.5 H549.5 V367.5 H551.5 V381.5 H553.5 V367.5 H553.5 V381.5 H556.5 V367.5 H557.5 V381.5 H559.5 V367.5 H559.5 V381.5 H562.5 V367.5 H564.5 V381.5 H566.5 V367.5 H566.5 V381.5 H569.5 V367.5 H570.5 V381.5 H572.5 V367.5 H572.5 V381.5 H576.5 V367.5 H578.5 V381.5 H580.5 V367.5 H580.5 V381.5 H582.5 V367.5 H584.5 V381.5 H586.5 V367.5 H586.5 V381.5 H589.5 V367.5 H591.5 V381.5 H593.5 V367.5 H593.5 V381.5 H596.5 V367.5 H597.5 V381.5 H599.5 V367.5 H599.5 V381.5 H602.5 V367.5 H604.5 V381.5 H606.5 V367.5 H606.5 V381.5 H609.5 V367.5 H610.5 V381.5 H612.5 V367.5 H612.5 V381.5 H615.5 V367.5 H617.5 V381.5 H619.5 V367.5 H619.5 V381.5 H622.5 V367.5 H623.5 V381.5 H625.5 V367.5 H625.5 V381.5 H628.5 V367.5 H630.5 V381.5 H632.5 V367.5 H632.5 V381.5 H635.5 V367.5 H636.5 V381.5 H638.5 V367.5 H638.5 V381.5 H641.5 V367.5 H643.5 V381.5 H645.5 V367.5 H645.5 V381.5 H648.5 V367.5 H649.5 V381.5 H651.5 V367.5 H651.5 V381.5 H654.5 V367.5 H656.5 V381.5 H658.5 V367.5 H658.5 V381.5 H661.5 V367.5 H662.5 V381.5 H664.5 V367.5 H664.5 V381.5 H667.5 V367.5 H669.5 V381.5 H671.5 V367.5 H671.5 V381.5 H674.5 V367.5 H675.5 V381.5 H677.5 V367.5 H677.5 V381.5 H680.5 V367.5 H682.5 V381.5 H684.5 V367.5 H684.5 V381.5 H687.5 V367.5 H688.5 V381.5 H690.5 V367.5 H690.5 V381.5 H693.5 V367.5 H695.5 V381.5 H697.5 V367.5 H697.5 V381.5 H700.5 V367.5 H701.5 V381.5 H703.5 V367.5 H703.5 V381.5 H706.5 V367.5 H708.5 V381.5 H710.5 V367.5 H710.5 V381.5 H713.5 V367.5 H714.5 V381.5 H716.5 V367.5 H716.5 V381.5 H719.5 V367.5 H721.5 V381.5 H723.5 V367.5 H723.5 V381.5 H726.5 V367.5 H727.5 V381.5 H729.5 V367.5 H729.5 V381.5 H732.5 V367.5 H734.5 V381.5 H736.5 V367.5 H736.5 V381.5 H739.5 V367.5 H740.5 V381.5 H742.5 V367.5 H742.5 V381.5 H745.5 V367.5 H747.5 V381.5 H749.5 V367.5 H749.5 V381.5 H752.5 V367.5 H753.5 V381.5 H755.5 V367.5 H755.5 V381.5 H758.5 V367.5 H760.5 V381.5 H762.5 V367.5 H762.5 V381.5 H765.5 V367.5 H766.5 V381.5 H768.5 V367.5 H768.5 V381.5 H771.5 V367.5 H773.5 V381.5 H775.5 V367.5 H775.5 V381.5 H778.5 V367.5 H779.5 V381.5 H781.5 V367.5 H781.5 V381.5 H784.5 V367.5 H786.5 V381.5 H788.5 V367.5 H788.5 V381.5 H791.5 V367.5 H792.5 V381.5 H794.5 V367.5 H794.5 V381.5 H797.5 V367.5 H799.5 V381.5 H801.5 V367.5 H801.5 V381.5 H804.5 V367.5 H805.5 V381.5 H807.5 V367.5 H807.5 V381.5 H810.5 V367.5 H812.5 V381.5 H814.5 V367.5 H814.5 V381.5 H817.5 V367.5 H818.5 V381.5 H820.5 V367.5 H820.5 V381.5 H823.5 V367.5 H825.5 V381.5 H827.5 V367.5 H827.5 V381.5 H830.5 V367.5 H831.5 V381.5 H833.5 V367.5 H833.5 V381.5 H836.5 V367.5 H838.5 V381.5 H840.5 V367.5 H840.5 V381.5 H843.5 V367.5 H844.5 V381.5 H846.5 V367.5 H846.5 V381.5 H849.5 V367.5 H851.5 V381.5 H853.5 V367.5 H853.5 V381.5 H856.5 V367.5 H857.5 V381.5 H859.5 V367.5 H859.5 V381.5 H862.5 V367.5 H864.5 V381.5 H866.5 V367.5 H866.5 V381.5 H869.5 V367.5 H870.5 V381.5 H872.5 V367.5 H872.5 V381.5 H875.5 V367.5 H877.5 V381.5 H879.5 V367.5 H879.5 V381.5 H882.5 V367.5 H883.5 V381.5 H885.5 V367.5 H885.5 V381.5 H888.5 V367.5 H890.5 V381.5 H892.5 V367.5 H892.5 V381.5 H895.5 V367.5 H896.5 V381.5 H898.5 V367.5 H898.5 V381.5 H901.5 V367.5 H903.5 V381.5 H905.5 V367.5 H905.5 V381.5 H908.5 V367.5 H909.5 V381.5 H911.5 V367.5 H911.5 V381.5 H914.5 V367.5 H916.5 V381.5 H918.5 V367.5 H918.5 V381.5 H921.5 V367.5 H922.5 V381.5 H924.5 V367.5 H924.5 V381.5 H927.5 V367.5 H929.5 V381.5 H931.5 V367.5 H931.5 V381.5 H934.5 V367.5 H935.5 V381.5 H937.5 V367.5 H937.5 V381.5 H940.5 V367.5 H942.5 V381.5 H944.5 V367.5 H944.5 V381.5 H947.5 V367.5 H948.5 V381.5 H950.5 V367.5 H950.5 V381.5 H953.5 V367.5 H955.5 V381.5 H957.5 V367.5 H957.5 V381.5 H960.5 V367.5 H961.5 V381.5 H963.5 V367.5 H963.5 V381.5 H966.5 V367.5 H968.5 V381.5 H970.5 V367.5 H970.5 V381.5 H973.5 V367.5 H974.5 V381.5 H976.5 V367.5 H976.5 V381.5 H979.5 V367.5 H981.5 V381.5 H983.5 V367.5 H983.5 V381.5 H986.5 V367.5 H987.5 V381.5 H989.5 V367.5 H989.5 V381.5 H992.5 V367.5 H994.5 V381.5 H996.5 V367.5 H996.5 V381.5 H999.5 V367.5 H1000.5 V381.5 H1002.5 V367.5 H1002.5 V381.5 H1005.5 V367.5 H1007.5 V381.5 H1009.5 V367.5 H1009.5 V381.5 H1012.5 V367.5 H1013.5 V381.5 H1015.5 V367.5 H1015.5 V381.5 H1018.5 V367.5 H1020.5 V381.5 H1022.5 V367.5 H1022.5 V381.5 H1025.5 V367.5 H1026.5 V381.5 H1028.5 V367.5 H1028.5 V381.5 H1031.5 V367.5 H1033.5 V381.5 H1035.5 V367.5 H1035.5 V381.5 H1038.5 V367.5 H1039.5 V381.5 H1041.5 V367.5 H1041.5 V381.5 H1044.5 V367.5 H1046.5 V381.5 H1048.5 V367.5 H1048.5 V381.5 H1051.5 V367.5 H1052.5 V381.5 H1054.5 V367.5 H1054.5 V381.5 H1057.5 V367.5 H1059.5 V381.5 H1061.5 V367.5 H1061.5 V381.5 H1064.5 V367.5 H1065.5 V381.5 H1067.5 V367.5 H1067.5 V381.5 H1070.5 V367.5 H1072.5 V381.5 H1074.5 V367.5 H1074.5 V381.5 H1077.5 V367.5 H1078.5 V381.5 H1080.5 V367.5 H1080.5 V381.5 H1083.5 V367.5 H1085.5 V381.5 H1087.5 V367.5 H1087.5 V381.5 H1090.5 V367.5 H1091.5 V381.5 H1093.5 V367.5 H1093.5 V381.5 H1096.5 V367.5 H1098.5 V381.5 H1100.5 V367.5 H1100.5 V381.5 H1103.5 V367.5 H1104.5 V381.5 H1106.5 V367.5 H1106.5 V381.5 H1109.5 V367.5 H1111.5 V381.5 H1113.5 V367.5 H1113.5 V381.5 H1116.5 V367.5 H1117.5 V381.5 H1119.5 V367.5 H1119.5 V381.5 H1123" fill="none" stroke="#ff0000" stroke-width="1"/>
<path d="M48,365.5 H50.5 V351.5 H52.5 V365.5 H57.5 V351.5 H59.5 V365.5 H63.5 V351.5 H65.5 V365.5 H70.5 V351.5 H72.5 V365.5 H76.5 V351.5 H78.5 V365.5 H83.5 V351.5 H85.5 V365.5 H89.5 V351.5 H91.5 V365.5 H96.5 V351.5 H98.5 V365.5 H102.5 V351.5 H104.5 V365.5 H109.5 V351.5 H111.5 V365.5 H115.5 V351.5 H117.5 V365.5 H122.5 V351.5 H124.5 V365.5 H128.5 V351.5 H130.5 V365.5 H135.5 V351.5 H137.5 V365.5 H141.5 V351.5 H143.5 V365.5 H148.5 V351.5 H150.5 V365.5 H154.5 V351.5 H156.5 V365.5 H161.5 V351.5 H163.5 V365.5 H167.5 V351.5 H169.5 V365.5 H174.5 V351.5 H176.5 V365.5 H180.5 V351.5 H182.5 V365.5 H187.5 V351.5 H189.5 V365.5 H193.5 V351.5 H195.5 V365.5 H200.5 V351.5 H202.5 V365.5 H206.5 V351.5 H208.5 V365.5 H213.5 V351.5 H215.5 V365.5 H219.5 V351.5 H221.5 V365.5 H226.5 V351.5 H228.5 V365.5 H232.5 V351.5 H234.5 V365.5 H239.5 V351.5 H241.5 V365.5 H245.5 V351.5 H247.5 V365.5 H252.5 V351.5 H254.5 V365.5 H258.5 V351.5 H260.5 V365.5 H265.5 V351.5 H267.5 V365.5 H271.5 V351.5 H273.5 V365.5 H278.5 V351.5 H280.5 V365.5 H284.5 V351.5 H286.5 V365.5 H291.5 V351.5 H293.5 V365.5 H297.5 V351.5 H299.5 V365.5 H304.5 V351.5 H306.5 V365.5 H310.5 V351.5 H312.5 V365.5 H317.5 V351.5 H319.5 V365.5 H323.5 V351.5 H325.5 V365.5 H330.5 V351.5 H332.5 V365.5 H336.5 V351.5 H338.5 V365.5 H343.5 V351.5 H345.5 V365.5 H349.5 V351.5 H351.5 V365.5 H356.5 V351.5 H358.5 V365.5 H362.5 V351.5 H364.5 V365.5 H369.5 V351.5 H371.5 V365.5 H375.5 V351.5 H377.5 V365.5 H382.5 V351.5 H384.5 V365.5 H388.5 V351.5 H390.5 V365.5 H395.5 V351.5 H397.5 V365.5 H401.5 V351.5 H403.5 V365.5 H408.5 V351.5 H410.5 V365.5 H414.5 V351.5 H416.5 V365.5 H421.5 V351.5 H423.5 V365.5 H427.5 V351.5 H429.5 V365.5 H434.5 V351.5 H436.5 V365.5 H440.5 V351.5 H442.5 V365.5 H447.5 V351.5 H449.5 V365.5 H453.5 V351.5 H455.5 V365.5 H460.5 V351.5 H462.5 V365.5 H466.5 V351.5 H468.5 V365.5 H473.5 V351.5 H475.5 V365.5 H479.5 V351.5 H481.5 V365.5 H486.5 V351.5 H488.5 V365.5 H492.5 V351.5 H494.5 V365.5 H499.5 V351.5 H501.5 V365.5 H505.5 V351.5 H507.5 V365.5 H512.5 V351.5 H514.5 V365.5 H518.5 V351.5 H520.5 V365.5 H525.5 V351.5 H527.5 V365.5 H531.5 V351.5 H533.5 V365.5 H538.5 V351.5 H540.5 V365.5 H544.5 V351.5 H546.5 V365.5 H551.5 V351.5 H553.5 V365.5 H557.5 V351.5 H559.5 V365.5 H564.5 V351.5 H566.5 V365.5 H570.5 V351.5 H572.5 V365.5 H578.5 V351.5 H580.5 V365.5 H584.5 V351.5 H586.5 V365.5 H591.5 V351.5 H593.5 V365.5 H597.5 V351.5 H599.5 V365.5 H604.5 V351.5 H606.5 V365.5 H610.5 V351.5 H612.5 V365.5 H617.5 V351.5 H619.5 V365.5 H623.5 V351.5 H625.5 V365.5 H630.5 V351.5 H632.5 V365.5 H636.5 V351.5 H638.5 V365.5 H643.5 V351.5 H645.5 V365.5 H649.5 V351.5 H651.5 V365.5 H656.5 V351.5 H658.5 V365.5 H662.5 V351.5 H664.5 V365.5 H669.5 V351.5 H671.5 V365.5 H675.5 V351.5 H677.5 V365.5 H682.5 V351.5 H684.5 V365.5 H688.5 V351.5 H690.5 V365.5 H695.5 V351.5 H697.5 V365.5 H701.5 V351.5 H703.5 V365.5 H708.5 V351.5 H710.5 V365.5 H714.5 V351.5 H716.5 V365.5 H721.5 V351.5 H723.5 V365.5 H727.5 V351.5 H729.5 V365.5 H734.5 V351.5 H736.5 V365.5 H740.5 V351.5 H742.5 V365.5 H747.5 V351.5 H749.5 V365.5 H753.5 V351.5 H755.5 V365.5 H760.5 V351.5 H762.5 V365.5 H766.5 V351.5 H768.5 V365.5 H773.5 V351.5 H775.5 V365.5 H779.5 V351.5 H781.5 V365.5 H786.5 V351.5 H788.5 V365.5 H792.5 V351.5 H794.5 V365.5 H799.5 V351.5 H801.5 V365.5 H805.5 V351.5 H807.5 V365.5 H812.5 V351.5 H814.5 V365.5 H818.5 V351.5 H820.5 V365.5 H825.5 V351.5 H827.5 V365.5 H831.5 V351.5 H833.5 V365.5 H838.5 V351.5 H840.5 V365.5 H844.5 V351.5 H846.5 V365.5 H851.5 V351.5 H853.5 V365.5 H857.5 V351.5 H859.5 V365.5 H864.5 V351.5 H866.5 V365.5 H870.5 V351.5 H872.5 V365.5 H877.5 V351.5 H879.5 V365.5 H883.5 V351.5 H885.5 V365.5 H890.5 V351.5 H892.5 V365.5 H896.5 V351.5 H898.5 V365.5 H903.5 V351.5 H905.5 V365.5 H909.5 V351.5 H911.5 V365.5 H916.5 V351.5 H918.5 V365.5 H922.5 V351.5 H924.5 V365.5 H929.5 V351.5 H931.5 V365.5 H935.5 V351.5 H937.5 V365.5 H942.5 V351.5 H944.5 V365.5 H948.5 V351.5 H950.5 V365.5 H955.5 V351.5 H957.5 V365.5 H961.5 V351.5 H963.5 V365.5 H968.5 V351.5 H970.5 V365.5 H974.5 V351.5 H976.5 V365.5 H981.5 V351.5 H983.5 V365.5 H987.5 V351.5 H989.5 V365.5 H994.5 V351.5 H996.5 V365.5 H1000.5 V351.5 H1002.5 V365.5 H1007.5 V351.5 H1009.5 V365.5 H1013.5 V351.5 H1015.5 V365.5 H1020.5 V351.5 H1022.5 V365.5 H1026.5 V351.5 H1028.5 V365.5 H1033.5 V351.5 H1035.5 V365.5 H1039.5 V351.5 H1041.5 V365.5 H1046.5 V351.5 H1048.5 V365.5 H1052.5 V351.5 H1054.5 V365.5 H1059.5 V351.5 H1061.5 V365.5 H1065.5 V351.5 H1067.5 V365.5 H1072.5 V351.5 H1074.5 V365.5 H1078.5 V351.5 H1080.5 V365.5 H1085.5 V351.5 H1087.5 V365.5 H1091.5 V351.5 H1093.5 V365.5 H1098.5 V351.5 H1100.5 V365.5 H1104.5 V351.5 H1106.5 V365.5 H1111.5 V351.5 H1113.5 V365.5 H1117.5 V351.5 H1119.5 V365.5 H1123" fill="none" stroke="#ffff00" stroke-width="1"/>
<path d="M48,349.5 H52.5 V335.5 H55.5 V349.5 H59.5 V335.5 H60.5 V349.5 H62.5 V335.5 H62.5 V349.5 H65.5 V335.5 H68.5 V349.5 H72.5 V335.5 H73.5 V349.5 H75.5 V335.5 H75.5 V349.5 H78.5 V335.5 H81.5 V349.5 H85.5 V335.5 H86.5 V349.5 H88.5 V335.5 H88.5 V349.5 H91.5 V335.5 H94.5 V349.5 H98.5 V335.5 H99.5 V349.5 H101.5 V335.5 H101.5 V349.5 H104.5 V335.5 H107.5 V349.5 H111.5 V335.5 H112.5 V349.5 H114.5 V335.5 H114.5 V349.5 H117.5 V335.5 H120.5 V349.5 H124.5 V335.5 H125.5 V349.5 H127.5 V335.5 H127.5 V349.5 H130.5 V335.5 H133.5 V349.5 H137.5 V335.5 H138.5 V349.5 H140.5 V335.5 H140.5 V349.5 H143.5 V335.5 H146.5 V349.5 H150.5 V335.5 H151.5 V349.5 H153.5 V335.5 H153.5 V349.5 H156.5 V335.5 H159.5 V349.5 H163.5 V335.5 H164.5 V349.5 H166.5 V335.5 H166.5 V349.5 H169.5 V335.5 H172.5 V349.5 H176.5 V335.5 H177.5 V349.5 H179.5 V335.5 H179.5 V349.5 H182.5 V335.5 H185.5 V349.5 H189.5 V335.5 H190.5 V349.5 H192.5 V335.5 H192.5 V349.5 H195.5 V335.5 H198.5 V349.5 H202.5 V335.5 H203.5 V349.5 H205.5 V335.5 H205.5 V349.5 H208.5 V335.5 H211.5 V349.5 H215.5 V335.5 H216.5 V349.5 H218.5 V335.5 H218.5 V349.5 H221.5 V335.5 H224.5 V349.5 H228.5 V335.5 H229.5 V349.5 H231.5 V335.5 H231.5 V349.5 H234.5 V335.5 H237.5 V349.5 H241.5 V335.5 H242.5 V349.5 H244.5 V335.5 H244.5 V349.5 H247.5 V335.5 H250.5 V349.5 H254.5 V335.5 H255.5 V349.5 H257.5 V335.5 H257.5 V349.5 H260.5 V335.5 H263.5 V349.5 H267.5 V335.5 H268.5 V349.5 H270.5 V335.5 H270.5 V349.5 H273.5 V335.5 H276.5 V349.5 H280.5 V335.5 H281.5 V349.5 H283.5 V335.5 H283.5 V349.5 H286.5 V335.5 H289.5 V349.5 H293.5 V335.5 H294.5 V349.5 H296.5 V335.5 H296.5 V349.5 H299.5 V335.5 H302.5 V349.5 H306.5 V335.5 H307.5 V349.5 H309.5 V335.5 H309.5 V349.5 H312.5 V335.5 H315.5 V349.5 H319.5 V335.5 H320.5 V349.5 H322.5 V335.5 H322.5 V349.5 H325.5 V335.5 H328.5 V349.5 H332.5 V335.5 H333.5 V349.5 H335.5 V335.5 H335.5 V349.5 H338.5 V335.5 H341.5 V349.5 H345.5 V335.5 H346.5 V349.5 H348.5 V335.5 H348.5 V349.5 H351.5 V335.5 H354.5 V349.5 H358.5 V335.5 H359.5 V349.5 H361.5 V335.5 H361.5 V349.5 H364.5 V335.5 H367.5 V349.5 H371.5 V335.5 H372.5 V349.5 H374.5 V335.5 H374.5 V349.5 H377.5 V335.5 H380.5 V349.5 H384.5 V335.5 H385.5 V349.5 H387.5 V335.5 H387.5 V349.5 H390.5 V335.5 H393.5 V349.5 H397.5 V335.5 H398.5 V349.5 H400.5 V335.5 H400.5 V349.5 H403.5 V335.5 H406.5 V349.5 H410.5 V335.5 H411.5 V349.5 H413.5 V335.5 H413.5 V349.5 H416.5 V335.5 H419.5 V349.5 H423.5 V335.5 H424.5 V349.5 H426.5 V335.5 H426.5 V349.5 H429.5 V335.5 H432.5 V349.5 H436.5 V335.5 H437.5 V349.5 H439.5 V335.5 H439.5 V349.5 H442.5 V335.5 H445.5 V349.5 H449.5 V335.5 H450.5 V349.5 H452.5 V335.5 H452.5 V349.5 H455.5 V335.5 H458.5 V349.5 H462.5 V335.5 H463.5 V349.5 H465.5 V335.5 H465.5 V349.5 H468.5 V335.5 H471.5 V349.5 H475.5 V335.5 H476.5 V349.5 H478.5 V335.5 H478.5 V349.5 H481.5 V335.5 H484.5 V349.5 H488.5 V335.5 H489.5 V349.5 H491.5 V335.5 H491.5 V349.5 H494.5 V335.5 H497.5 V349.5 H501.5 V335.5 H502.5 V349.5 H504.5 V335.5 H504.5 V349.5 H507.5 V335.5 H510.5 V349.5 H514.5 V335.5 H515.5 V349.5 H517.5 V335.5 H517.5 V349.5 H520.5 V335.5 H523.5 V349.5 H527.5 V335.5 H528.5 V349.5 H530.5 V335.5 H530.5 V349.5 H533.5 V335.5 H536.5 V349.5 H540.5 V335.5 H541.5 V349.5 H543.5 V335.5 H543.5 V349.5 H546.5 V335.5 H549.5 V349.5 H553.5 V335.5 H554.5 V349.5 H556.5 V335.5 H556.5 V349.5 H559.5 V335.5 H562.5 V349.5 H566.5 V335.5 H567.5 V349.5 H569.5 V335.5 H569.5 V349.5 H572.5 V335.5 H575.5 V349.5 H580.5 V335.5 H580.5 V349.5 H582.5 V335.5 H582.5 V349.5 H586.5 V335.5 H588.5 V349.5 H593.5 V335.5 H594.5 V349.5 H596.5 V335.5 H596.5 V349.5 H599.5 V335.5 H602.5 V349.5 H606.5 V335.5 H607.5 V349.5 H609.5 V335.5 H609.5 V349.5 H612.5 V335.5 H615.5 V349.5 H619.5 V335.5 H620.5 V349.5 H622.5 V335.5 H622.5 V349.5 H625.5 V335.5 H628.5 V349.5 H632.5 V335.5 H633.5 V349.5 H635.5 V335.5 H635.5 V349.5 H638.5 V335.5 H641.5 V349.5 H645.5 V335.5 H646.5 V349.5 H648.5 V335.5 H648.5 V349.5 H651.5 V335.5 H654.5 V349.5 H658.5 V335.5 H659.5 V349.5 H661.5 V335.5 H661.5 V349.5 H664.5 V335.5 H667.5 V349.5 H671.5 V335.5 H672.5 V349.5 H674.5 V335.5 H674.5 V349.5 H677.5 V335.5 H680.5 V349.5 H684.5 V335.5 H685.5 V349.5 H687.5 V335.5 H687.5 V349.5 H690.5 V335.5 H693.5 V349.5 H697.5 V335.5 H698.5 V349.5 H700.5 V335.5 H700.5 V349.5 H703.5 V335.5 H706.5 V349.5 H710.5 V335.5 H711.5 V349.5 H713.5 V335.5 H713.5 V349.5 H716.5 V335.5 H719.5 V349.5 H723.5 V335.5 H724.5 V349.5 H726.5 V335.5 H726.5 V349.5 H729.5 V335.5 H732.5 V349.5 H736.5 V335.5 H737.5 V349.5 H739.5 V335.5 H739.5 V349.5 H742.5 V335.5 H745.5 V349.5 H749.5 V335.5 H750.5 V349.5 H752.5 V335.5 H752.5 V349.5 H755.5 V335.5 H758.5 V349.5 H762.5 V335.5 H763.5 V349.5 H765.5 V335.5 H765.5 V349.5 H768.5 V335.5 H771.5 V349.5 H775.5 V335.5 H776.5 V349.5 H778.5 V335.5 H778.5 V349.5 H781.5 V335.5 H784.5 V349.5 H788.5 V335.5 H789.5 V349.5 H791.5 V335.5 H791.5 V349.5 H794.5 V335.5 H797.5 V349.5 H801.5 V335.5 H802.5 V349.5 H804.5 V335.5 H804.5 V349.5 H807.5 V335.5 H810.5 V349.5 H814.5 V335.5 H815.5 V349.5 H817.5 V335.5 H817.5 V349.5 H820.5 V335.5 H823.5 V349.5 H827.5 V335.5 H828.5 V349.5 H830.5 V335.5 H830.5 V349.5 H833.5 V335.5 H836.5 V349.5 H840.5 V335.5 H841.5 V349.5 H843.5 V335.5 H843.5 V349.5 H846.5 V335.5 H849.5 V349.5 H853.5 V335.5 H854.5 V349.5 H856.5 V335.5 H856.5 V349.5 H859.5 V335.5 H862.5 V349.5 H866.5 V335.5 H867.5 V349.5 H869.5 V335.5 H869.5 V349.5 H872.5 V335.5 H875.5 V349.5 H879.5 V335.5 H880.5 V349.5 H882.5 V335.5 H882.5 V349.5 H885.5 V335.5 H888.5 V349.5 H892.5 V335.5 H893.5 V349.5 H895.5 V335.5 H895.5 V349.5 H898.5 V335.5 H901.5 V349.5 H905.5 V335.5 H906.5 V349.5 H908.5 V335.5 H908.5 V349.5 H911.5 V335.5 H914.5 V349.5 H918.5 V335.5 H919.5 V349.5 H921.5 V335.5 H921.5 V349.5 H924.5 V335.5 H927.5 V349.5 H931.5 V335.5 H932.5 V349.5 H934.5 V335.5 H934.5 V349.5 H937.5 V335.5 H940.5 V349.5 H944.5 V335.5 H945.5 V349.5 H947.5 V335.5 H947.5 V349.5 H950.5 V335.5 H953.5 V349.5 H957.5 V335.5 H958.5 V349.5 H960.5 V335.5 H960.5 V349.5 H963.5 V335.5 H966.5 V349.5 H970.5 V335.5 H971.5 V349.5 H973.5 V335.5 H973.5 V349.5 H976.5 V335.5 H979.5 V349.5 H983.5 V335.5 H984.5 V349.5 H986.5 V335.5 H986.5 V349.5 H989.5 V335.5 H992.5 V349.5 H996.5 V335.5 H997.5 V349.5 H999.5 V335.5 H999.5 V349.5 H1002.5 V335.5 H1005.5 V349.5 H1009.5 V335.5 H1010.5 V349.5 H1012.5 V335.5 H1012.5 V349.5 H1015.5 V335.5 H1018.5 V349.5 H1022.5 V335.5 H1023.5 V349.5 H1025.5 V335.5 H1025.5 V349.5 H1028.5 V335.5 H1031.5 V349.5 H1035.5 V335.5 H1036.5 V349.5 H1038.5 V335.5 H1038.5 V349.5 H1041.5 V335.5 H1044.5 V349.5 H1048.5 V335.5 H1049.5 V349.5 H1051.5 V335.5 H1051.5 V349.5 H1054.5 V335.5 H1057.5 V349.5 H1061.5 V335.5 H1062.5 V349.5 H1064.5 V335.5 H1064.5 V349.5 H1067.5 V335.5 H1070.5 V349.5 H1074.5 V335.5 H1075.5 V349.5 H1077.5 V335.5 H1077.5 V349.5 H1080.5 V335.5 H1083.5 V349.5 H1087.5 V335.5 H1088.5 V349.5 H1090.5 V335.5 H1090.5 V349.5 H1093.5 V335.5 H1096.5 V349.5 H1100.5 V335.5 H1101.5 V349.5 H1103.5 V335.5 H1103.5 V349.5 H1106.5 V335.5 H1109.5 V349.5 H1113.5 V335.5 H1114.5 V349.5 H1116.5 V335.5 H1116.5 V349.5 H1119.5 V335.5 H1122.5 V349.5 H1123" fill="none" stroke="#ff00ff" stroke-width="1"/>
<path d="M48,332.5 H54.5 V319.5 H55.5 V332.5 H60.5 V319.5 H62.5 V332.5 H67.5 V319.5 H68.5 V332.5 H73.5 V319.5 H75.5 V332.5 H80.5 V319.5 H81.5 V332.5 H86.5 V319.5 H88.5 V332.5 H93.5 V319.5 H94.5 V332.5 H99.5 V319.5 H101.5 V332.5 H106.5 V319.5 H107.5 V332.5 H112.5 V319.5 H114.5 V332.5 H119.5 V319.5 H120.5 V332.5 H125.5 V319.5 H127.5 V332.5 H132.5 V319.5 H133.5 V332.5 H138.5 V319.5 H140.5 V332.5 H145.5 V319.5 H146.5 V332.5 H151.5 V319.5 H153.5 V332.5 H158.5 V319.5 H159.5 V332.5 H164.5 V319.5 H166.5 V332.5 H171.5 V319.5 H172.5 V332.5 H177.5 V319.5 H179.5 V332.5 H184.5 V319.5 H185.5 V332.5 H190.5 V319.5 H192.5 V332.5 H197.5 V319.5 H198.5 V332.5 H203.5 V319.5 H205.5 V332.5 H210.5 V319.5 H211.5 V332.5 H216.5 V319.5 H218.5 V332.5 H223.5 V319.5 H224.5 V332.5 H229.5 V319.5 H231.5 V332.5 H236.5 V319.5 H237.5 V332.5 H242.5 V319.5 H244.5 V332.5 H249.5 V319.5 H250.5 V332.5 H255.5 V319.5 H257.5 V332.5 H262.5 V319.5 H263.5 V332.5 H268.5 V319.5 H270.5 V332.5 H275.5 V319.5 H276.5 V332.5 H281.5 V319.5 H283.5 V332.5 H288.5 V319.5 H289.5 V332.5 H294.5 V319.5 H296.5 V332.5 H301.5 V319.5 H302.5 V332.5 H307.5 V319.5 H309.5 V332.5 H314.5 V319.5 H315.5 V332.5 H320.5 V319.5 H322.5 V332.5 H327.5 V319.5 H328.5 V332.5 H333.5 V319.5 H335.5 V332.5 H340.5 V319.5 H341.5 V332.5 H346.5 V319.5 H348.5 V332.5 H353.5 V319.5 H354.5 V332.5 H359.5 V319.5 H361.5 V332.5 H366.5 V319.5 H367.5 V332.5 H372.5 V319.5 H374.5 V332.5 H379.5 V319.5 H380.5 V332.5 H385.5 V319.5 H387.5 V332.5 H392.5 V319.5 H393.5 V332.5 H398.5 V319.5 H400.5 V332.5 H405.5 V319.5 H406.5 V332.5 H411.5 V319.5 H413.5 V332.5 H418.5 V319.5 H419.5 V332.5 H424.5 V319.5 H426.5 V332.5 H431.5 V319.5 H432.5 V332.5 H437.5 V319.5 H439.5 V332.5 H444.5 V319.5 H445.5 V332.5 H450.5 V319.5 H452.5 V332.5 H457.5 V319.5 H458.5 V332.5 H463.5 V319.5 H465.5 V332.5 H470.5 V319.5 H471.5 V332.5 H476.5 V319.5 H478.5 V332.5 H483.5 V319.5 H484.5 V332.5 H489.5 V319.5 H491.5 V332.5 H496.5 V319.5 H497.5 V332.5 H502.5 V319.5 H504.5 V332.5 H509.5 V319.5 H510.5 V332.5 H515.5 V319.5 H517.5 V332.5 H522.5 V319.5 H523.5 V332.5 H528.5 V319.5 H530.5 V332.5 H535.5 V319.5 H536.5 V332.5 H541.5 V319.5 H543.5 V332.5 H548.5 V319.5 H549.5 V332.5 H554.5 V319.5 H556.5 V332.5 H561.5 V319.5 H562.5 V332.5 H567.5 V319.5 H569.5 V332.5 H574.5 V319.5 H576.5 V332.5 H580.5 V319.5 H582.5 V332.5 H588.5 V319.5 H589.5 V332.5 H594.5 V319.5 H596.5 V332.5 H601.5 V319.5 H602.5 V332.5 H607.5 V319.5 H609.5 V332.5 H614.5 V319.5 H615.5 V332.5 H620.5 V319.5 H622.5 V332.5 H627.5 V319.5 H628.5 V332.5 H633.5 V319.5 H635.5 V332.5 H640.5 V319.5 H641.5 V332.5 H646.5 V319.5 H648.5 V332.5 H653.5 V319.5 H654.5 V332.5 H659.5 V319.5 H661.5 V332.5 H666.5 V319.5 H667.5 V332.5 H672.5 V319.5 H674.5 V332.5 H679.5 V319.5 H680.5 V332.5 H685.5 V319.5 H687.5 V332.5 H692.5 V319.5 H693.5 V332.5 H698.5 V319.5 H700.5 V332.5 H705.5 V319.5 H706.5 V332.5 H711.5 V319.5 H713.5 V332.5 H718.5 V319.5 H719.5 V332.5 H724.5 V319.5 H726.5 V332.5 H731.5 V319.5 H732.5 V332.5 H737.5 V319.5 H739.5 V332.5 H744.5 V319.5 H745.5 V332.5 H750.5 V319.5 H752.5 V332.5 H757.5 V319.5 H758.5 V332.5 H763.5 V319.5 H765.5 V332.5 H770.5 V319.5 H771.5 V332.5 H776.5 V319.5 H778.5 V332.5 H783.5 V319.5 H784.5 V332.5 H789.5 V319.5 H791.5 V332.5 H796.5 V319.5 H797.5 V332.5 H802.5 V319.5 H804.5 V332.5 H809.5 V319.5 H810.5 V332.5 H815.5 V319.5 H817.5 V332.5 H822.5 V319.5 H823.5 V332.5 H828.5 V319.5 H830.5 V332.5 H835.5 V319.5 H836.5 V332.5 H841.5 V319.5 H843.5 V332.5 H848.5 V319.5 H849.5 V332.5 H854.5 V319.5 H856.5 V332.5 H861.5 V319.5 H862.5 V332.5 H867.5 V319.5 H869.5 V332.5 H874.5 V319.5 H875.5 V332.5 H880.5 V319.5 H882.5 V332.5 H887.5 V319.5 H888.5 V332.5 H893.5 V319.5 H895.5 V332.5 H900.5 V319.5 H901.5 V332.5 H906.5 V319.5 H908.5 V332.5 H913.5 V319.5 H914.5 V332.5 H919.5 V319.5 H921.5 V332.5 H926.5 V319.5 H927.5 V332.5 H932.5 V319.5 H934.5 V332.5 H939.5 V319.5 H940.5 V332.5 H945.5 V319.5 H947.5 V332.5 H952.5 V319.5 H953.5 V332.5 H958.5 V319.5 H960.5 V332.5 H965.5 V319.5 H966.5 V332.5 H971.5 V319.5 H973.5 V332.5 H978.5 V319.5 H979.5 V332.5 H984.5 V319.5 H986.5 V332.5 H991.5 V319.5 H992.5 V332.5 H997.5 V319.5 H999.5 V332.5 H1004.5 V319.5 H1005.5 V332.5 H1010.5 V319.5 H1012.5 V332.5 H1017.5 V319.5 H1018.5 V332.5 H1023.5 V319.5 H1025.5 V332.5 H1030.5 V319.5 H1031.5 V332.5 H1036.5 V319.5 H1038.5 V332.5 H1043.5 V319.5 H1044.5 V332.5 H1049.5 V319.5 H1051.5 V332.5 H1056.5 V319.5 H1057.5 V332.5 H1062.5 V319.5 H1064.5 V332.5 H1069.5 V319.5 H1070.5 V332.5 H1075.5 V319.5 H1077.5 V332.5 H1082.5 V319.5 H1083.5 V332.5 H1088.5 V319.5 H1090.5 V332.5 H1095.5 V319.5 H1096.5 V332.5 H1101.5 V319.5 H1103.5 V332.5 H1108.5 V319.5 H1109.5 V332.5 H1114.5 V319.5 H1116.5 V332.5 H1121.5 V319.5 H1122.5 V332.5 H1123" fill="none" stroke="#00ff80" stroke-width="1"/>
<path d="M48,316.5 H257.5 V303.5 H465.5 V316.5 H673.5 V303.5 H881.5 V316.5 H1089.5 V303.5 H1123" fill="none" stroke="#8000ff"/>
<path d="M48,300.5 H465.5 V287.5 H881.5 V300.5 H1123" fill="none" stroke="#ff8000"/>
<path d="M2.5,818.5 V452.5 Q2.5,448.5 6.5,448.5 H1145.5 Q1149.5,448.5 1149.5,452.5 V818.5 Z" fill="#b9d1ea" stroke="#000000" stroke-width="1" shape-rendering="geometricPrecision"/>
<rect x="3" y="449" width="1146" height="1" fill="#eef3f9"/>
<rect x="3" y="450" width="1146" height="30" fill="url(#tbAct)"/>
<rect x="3" y="449" width="1" height="369" fill="#ffffff" opacity="0.7"/>
<text x="417" y="473.6" font-size="14" fill="#000" textLength="235" lengthAdjust="spacingAndGlyphs" >Digital - Logic - Test - S-0115_s.asc</text>
<rect x="1041.5" y="459.5" width="30" height="17" rx="2" fill="url(#btnAct)" stroke="#8fa2bb" shape-rendering="geometricPrecision"/>
<rect x="1074.5" y="459.5" width="30" height="17" rx="2" fill="url(#btnAct)" stroke="#8fa2bb" shape-rendering="geometricPrecision"/>
<rect x="1108.5" y="459.5" width="30" height="17" rx="2" fill="url(#btnClose)" stroke="#8a5040" shape-rendering="geometricPrecision"/>
<rect x="1051.5" y="468.5" width="10" height="4" rx="1" fill="#fff" stroke="#404a58" shape-rendering="geometricPrecision"/>
<rect x="1084.5" y="464.5" width="10" height="7" rx="1" fill="#fff" stroke="#404a58" shape-rendering="geometricPrecision"/><rect x="1087" y="467" width="5" height="2" fill="#8090a8"/>
<path d="M1119.5,464.5 L1127.5,470.5 M1127.5,464.5 L1119.5,470.5" stroke="#3c2420" stroke-width="4.2" stroke-linecap="round" shape-rendering="geometricPrecision"/><path d="M1119.5,464.5 L1127.5,470.5 M1127.5,464.5 L1119.5,470.5" stroke="#fff" stroke-width="2.2" stroke-linecap="round" shape-rendering="geometricPrecision"/>
<rect x="1148" y="453" width="1" height="365" fill="#33d4f0"/><rect x="3" y="817" width="1146" height="1" fill="#33d4f0"/>
<rect x="10" y="480" width="1132" height="331" fill="#ffffff"/>
<rect x="10" y="480" width="1130" height="1" fill="#a0a0a0"/><rect x="10" y="480" width="1" height="329" fill="#a0a0a0"/>
<rect x="11" y="481" width="1129" height="1" fill="#696969"/><rect x="11" y="481" width="1" height="328" fill="#696969"/>
<rect x="12" y="482" width="1128" height="327" fill="#c0c0c0"/>
<circle cx="81" cy="541.5" r="24" fill="none" stroke="#000090" stroke-width="1" shape-rendering="geometricPrecision"/>
<path d="M74.5,527.0 L88,527.0" fill="none" stroke="#000090" stroke-width="1"/>
<path d="M81.5,520.5 L81.5,533.0" fill="none" stroke="#000090" stroke-width="1"/>
<path d="M74.5,557.0 L88,557.0" fill="none" stroke="#000090" stroke-width="1"/>
<path d="M69,511.5 L81.5,511.5 L81.5,517.5" fill="none" stroke="#0000ff" stroke-width="1"/>
<path d="M81.5,565.5 L81.5,573.5" fill="none" stroke="#0000ff" stroke-width="1"/>
<path d="M67.5,573.5 L95.5,573.5 L81.5,587.5 Z" fill="none" stroke="#0000ff" shape-rendering="geometricPrecision"/>
<text x="58.8" y="517.75" font-size="17" font-weight="bold" fill="#000" stroke="#000" stroke-width="0.45" textLength="11.2" lengthAdjust="spacingAndGlyphs">F</text>
<text x="99.4" y="517.75" font-size="17" font-weight="bold" fill="#000" stroke="#000" stroke-width="0.45" textLength="22.4" lengthAdjust="spacingAndGlyphs">V1</text>
<text x="100.7" y="538.75" font-size="17" font-weight="bold" fill="#000" stroke="#000" stroke-width="0.45" textLength="9.9" lengthAdjust="spacingAndGlyphs">1</text>
<text x="99.7" y="560.6" font-size="17" font-weight="bold" fill="#000" stroke="#000" stroke-width="0.45" textLength="63.4" lengthAdjust="spacingAndGlyphs">Rser=1</text>
<circle cx="218" cy="566.5" r="24.2" fill="none" stroke="#000090" stroke-width="1" shape-rendering="geometricPrecision"/>
<path d="M211.5,552.0 L225,552.0" fill="none" stroke="#000090" stroke-width="1"/>
<path d="M218.5,545.5 L218.5,558.0" fill="none" stroke="#000090" stroke-width="1"/>
<path d="M211.5,582.0 L225,582.0" fill="none" stroke="#000090" stroke-width="1"/>
<path d="M205,535.5 L218.5,535.5 L218.5,542.3" fill="none" stroke="#0000ff" stroke-width="1"/>
<path d="M218.5,590.7 L218.5,597.5" fill="none" stroke="#0000ff" stroke-width="1"/>
<path d="M204.5,597.5 L232.5,597.5 L218.5,611.5 Z" fill="none" stroke="#0000ff" shape-rendering="geometricPrecision"/>
<text x="192.7" y="541.5" font-size="17" font-weight="bold" fill="#000" stroke="#000" stroke-width="0.45" textLength="13.5" lengthAdjust="spacingAndGlyphs">R</text>
<text x="235.05" y="541.5" font-size="17" font-weight="bold" fill="#000" stroke="#000" stroke-width="0.45" textLength="23.1" lengthAdjust="spacingAndGlyphs">V3</text>
<text x="235.3" y="563.75" font-size="17" font-weight="bold" fill="#000" stroke="#000" stroke-width="0.45" textLength="75.8" lengthAdjust="spacingAndGlyphs">Rser=24</text>
<text x="235.3" y="585.3" font-size="17" font-weight="bold" fill="#000" stroke="#000" stroke-width="0.45" textLength="44.8" lengthAdjust="spacingAndGlyphs">AC .1</text>
<text x="235.3" y="607.5" font-size="17" font-weight="bold" fill="#000" stroke="#000" stroke-width="0.45" textLength="288.7" lengthAdjust="spacingAndGlyphs">PULSE(0 1 24u 3n6 3n4 .5u 1u 1)</text>
<circle cx="69" cy="653" r="24.5" fill="none" stroke="#000090" stroke-width="1" shape-rendering="geometricPrecision"/>
<path d="M62.5,638.5 L76,638.5" fill="none" stroke="#000090" stroke-width="1"/>
<path d="M69.5,632.0 L69.5,644.5" fill="none" stroke="#000090" stroke-width="1"/>
<path d="M62.5,668.5 L76,668.5" fill="none" stroke="#000090" stroke-width="1"/>
<path d="M57,622.5 L69.5,622.5 L69.5,628.5" fill="none" stroke="#0000ff" stroke-width="1"/>
<path d="M69.5,677.5 L69.5,684.5" fill="none" stroke="#0000ff" stroke-width="1"/>
<path d="M55.5,684.5 L83.5,684.5 L69.5,698.5 Z" fill="none" stroke="#0000ff" shape-rendering="geometricPrecision"/>
<text x="45.2" y="628.9" font-size="17" font-weight="bold" fill="#000" stroke="#000" stroke-width="0.45" textLength="13.0" lengthAdjust="spacingAndGlyphs">C</text>
<text x="87.1" y="628.9" font-size="17" font-weight="bold" fill="#000" stroke="#000" stroke-width="0.45" textLength="24.0" lengthAdjust="spacingAndGlyphs">V2</text>
<text x="87.4" y="650.6" font-size="17" font-weight="bold" fill="#000" stroke="#000" stroke-width="0.45" textLength="75.1" lengthAdjust="spacingAndGlyphs">Rser=24</text>
<text x="87.4" y="672.6" font-size="17" font-weight="bold" fill="#000" stroke="#000" stroke-width="0.45" textLength="44.8" lengthAdjust="spacingAndGlyphs">AC .1</text>
<text x="87.4" y="693.6" font-size="17" font-weight="bold" fill="#000" stroke="#000" stroke-width="0.45" textLength="271.8" lengthAdjust="spacingAndGlyphs">PULSE(0 1 32u 3n6 3n4 .5u 1u)</text>
<text x="198.3" y="647.8" font-size="17" font-weight="bold" fill="#000" stroke="#000" stroke-width="0.45" textLength="193.4" lengthAdjust="spacingAndGlyphs">.tran 0 1 0 .1m startup</text>
<path d="M106.5,721.5 L106.5,770.5 L156.5,746.5 Z" fill="none" stroke="#000090" stroke-width="1.2" shape-rendering="geometricPrecision"/>
<path d="M132.0,734.5 L156.5,734.5" fill="none" stroke="#000090" stroke-width="1"/>
<rect x="154.0" y="732.0" width="5" height="5" fill="none" stroke="#0000ff" stroke-width="1"/>
<rect x="104.0" y="768.0" width="5" height="5" fill="none" stroke="#0000ff" stroke-width="1"/>
<circle cx="146.5" cy="758.2" r="6" fill="none" stroke="#000090" shape-rendering="geometricPrecision"/>
<path d="M152.5,758.5 L157.0,758.5" fill="none" stroke="#000090" stroke-width="1"/>
<text x="94.2" y="752.5" font-size="17" font-weight="bold" fill="#000" stroke="#000" stroke-width="0.45" textLength="12.9" lengthAdjust="spacingAndGlyphs">C</text>
<rect x="156.5" y="748" width="11" height="2" fill="#000"/>
<text x="155.3" y="765.6" font-size="17" font-weight="bold" fill="#000" stroke="#000" stroke-width="0.45" textLength="12.7" lengthAdjust="spacingAndGlyphs">C</text>
<path d="M243.5,721.5 L243.5,770.5 L293.5,746.5 Z" fill="none" stroke="#000090" stroke-width="1.2" shape-rendering="geometricPrecision"/>
<path d="M269.0,734.5 L293.5,734.5" fill="none" stroke="#000090" stroke-width="1"/>
<rect x="291.0" y="732.0" width="5" height="5" fill="none" stroke="#0000ff" stroke-width="1"/>
<rect x="241.0" y="768.0" width="5" height="5" fill="none" stroke="#0000ff" stroke-width="1"/>
<circle cx="283.5" cy="758.2" r="6" fill="none" stroke="#000090" shape-rendering="geometricPrecision"/>
<path d="M289.5,758.5 L294.0,758.5" fill="none" stroke="#000090" stroke-width="1"/>
<text x="230.5" y="752.5" font-size="17" font-weight="bold" fill="#000" stroke="#000" stroke-width="0.45" textLength="12.9" lengthAdjust="spacingAndGlyphs">R</text>
<rect x="292.5" y="748" width="12" height="2" fill="#000"/>
<text x="291.3" y="765.6" font-size="17" font-weight="bold" fill="#000" stroke="#000" stroke-width="0.45" textLength="13.9" lengthAdjust="spacingAndGlyphs">R</text>
<rect x="627.5" y="535.5" width="87" height="186" fill="#ffffc0" stroke="#0000a0" stroke-width="1"/>
<text x="606.6" y="527.8" font-size="17" font-weight="bold" fill="#000" stroke="#000" stroke-width="0.45" textLength="130.6" lengthAdjust="spacingAndGlyphs">K176uE12sub1</text>
<path d="M578,548.5 L627.5,548.5" fill="none" stroke="#0000ff" stroke-width="1"/>
<text x="567.7" y="554.7" font-size="17" font-weight="bold" fill="#000" stroke="#000" stroke-width="0.45" textLength="11.4" lengthAdjust="spacingAndGlyphs">F</text>
<path d="M602,597.5 L627.5,597.5" fill="none" stroke="#0000ff" stroke-width="1"/>
<text x="590.2" y="603.5" font-size="17" font-weight="bold" fill="#000" stroke="#000" stroke-width="0.45" textLength="13.0" lengthAdjust="spacingAndGlyphs">C</text>
<path d="M602,647.5 L627.5,647.5" fill="none" stroke="#0000ff" stroke-width="1"/>
<text x="589.6" y="652.9" font-size="17" font-weight="bold" fill="#000" stroke="#000" stroke-width="0.45" textLength="13.6" lengthAdjust="spacingAndGlyphs">R</text>
<path d="M627.5,697.5 L615.5,697.5 L615.5,734.5" fill="none" stroke="#0000ff" stroke-width="1"/>
<path d="M601.5,734.5 L629.5,734.5 L615.5,748.5 Z" fill="none" stroke="#0000ff" shape-rendering="geometricPrecision"/>
<path d="M714.5,548.5 L740,548.5" fill="none" stroke="#0000ff" stroke-width="1"/>
<text x="738.8" y="555.0" font-size="17" font-weight="bold" fill="#000" stroke="#000" stroke-width="0.45" textLength="25.4" lengthAdjust="spacingAndGlyphs">DK</text>
<path d="M714.5,573.5 L740,573.5" fill="none" stroke="#0000ff" stroke-width="1"/>
<text x="738.8" y="580.0" font-size="17" font-weight="bold" fill="#000" stroke="#000" stroke-width="0.45" textLength="22.4" lengthAdjust="spacingAndGlyphs">T0</text>
<path d="M714.5,597.5 L740,597.5" fill="none" stroke="#0000ff" stroke-width="1"/>
<text x="738.8" y="604.0" font-size="17" font-weight="bold" fill="#000" stroke="#000" stroke-width="0.45" textLength="22.4" lengthAdjust="spacingAndGlyphs">T1</text>
<path d="M714.5,622.5 L740,622.5" fill="none" stroke="#0000ff" stroke-width="1"/>
<text x="738.8" y="629.0" font-size="17" font-weight="bold" fill="#000" stroke="#000" stroke-width="0.45" textLength="22.4" lengthAdjust="spacingAndGlyphs">T2</text>
<path d="M714.5,647.5 L740,647.5" fill="none" stroke="#0000ff" stroke-width="1"/>
<text x="738.8" y="654.0" font-size="17" font-weight="bold" fill="#000" stroke="#000" stroke-width="0.45" textLength="22.4" lengthAdjust="spacingAndGlyphs">T3</text>
<path d="M714.5,672.5 L740,672.5" fill="none" stroke="#0000ff" stroke-width="1"/>
<text x="738.8" y="679.0" font-size="17" font-weight="bold" fill="#000" stroke="#000" stroke-width="0.45" textLength="25.4" lengthAdjust="spacingAndGlyphs">D2</text>
<path d="M714.5,697.5 L740,697.5" fill="none" stroke="#0000ff" stroke-width="1"/>
<text x="738.8" y="704.0" font-size="17" font-weight="bold" fill="#000" stroke="#000" stroke-width="0.45" textLength="24.4" lengthAdjust="spacingAndGlyphs">D1</text>
<text x="632.3" y="553.5" font-size="17" font-weight="bold" fill="#000" stroke="#000" stroke-width="0.45" textLength="21.7" lengthAdjust="spacingAndGlyphs">11</text>
<text x="632.3" y="566.4" font-size="17" font-weight="bold" fill="#000" stroke="#000" stroke-width="0.45" textLength="34.5" lengthAdjust="spacingAndGlyphs">Vdd</text>
<text x="632.3" y="603" font-size="17" font-weight="bold" fill="#000" stroke="#000" stroke-width="0.45" textLength="10.9" lengthAdjust="spacingAndGlyphs">2</text>
<text x="632.3" y="615.6" font-size="17" font-weight="bold" fill="#000" stroke="#000" stroke-width="0.45" textLength="12.9" lengthAdjust="spacingAndGlyphs">C</text>
<text x="633.5" y="652.3" font-size="17" font-weight="bold" fill="#000" stroke="#000" stroke-width="0.45" textLength="9.7" lengthAdjust="spacingAndGlyphs">1</text>
<text x="633.5" y="665.3" font-size="17" font-weight="bold" fill="#000" stroke="#000" stroke-width="0.45" textLength="12.7" lengthAdjust="spacingAndGlyphs">R</text>
<text x="633.5" y="702.7" font-size="17" font-weight="bold" fill="#000" stroke="#000" stroke-width="0.45" textLength="22.4" lengthAdjust="spacingAndGlyphs">10</text>
<text x="633.5" y="715.3" font-size="17" font-weight="bold" fill="#000" stroke="#000" stroke-width="0.45" textLength="29.3" lengthAdjust="spacingAndGlyphs">Vss</text>
<text x="696.3" y="553.5" font-size="17" font-weight="bold" fill="#000" stroke="#000" stroke-width="0.45" textLength="11.9" lengthAdjust="spacingAndGlyphs">3</text>
<text x="683.8" y="566.4" font-size="17" font-weight="bold" fill="#000" stroke="#000" stroke-width="0.45" textLength="24.4" lengthAdjust="spacingAndGlyphs">Q5</text>
<text x="696.3" y="578.5" font-size="17" font-weight="bold" fill="#000" stroke="#000" stroke-width="0.45" textLength="11.9" lengthAdjust="spacingAndGlyphs">6</text>
<text x="672.3" y="591.4" font-size="17" font-weight="bold" fill="#000" stroke="#000" stroke-width="0.45" textLength="35.9" lengthAdjust="spacingAndGlyphs">Q80</text>
<text x="696.3" y="603" font-size="17" font-weight="bold" fill="#000" stroke="#000" stroke-width="0.45" textLength="11.9" lengthAdjust="spacingAndGlyphs">7</text>
<text x="672.3" y="615.6" font-size="17" font-weight="bold" fill="#000" stroke="#000" stroke-width="0.45" textLength="35.9" lengthAdjust="spacingAndGlyphs">Q81</text>
<text x="696.3" y="628" font-size="17" font-weight="bold" fill="#000" stroke="#000" stroke-width="0.45" textLength="11.9" lengthAdjust="spacingAndGlyphs">8</text>
<text x="672.3" y="640.2" font-size="17" font-weight="bold" fill="#000" stroke="#000" stroke-width="0.45" textLength="35.9" lengthAdjust="spacingAndGlyphs">Q82</text>
<text x="696.3" y="652.3" font-size="17" font-weight="bold" fill="#000" stroke="#000" stroke-width="0.45" textLength="11.9" lengthAdjust="spacingAndGlyphs">9</text>
<text x="672.3" y="665.3" font-size="17" font-weight="bold" fill="#000" stroke="#000" stroke-width="0.45" textLength="35.9" lengthAdjust="spacingAndGlyphs">Q83</text>
<text x="696.3" y="676.6" font-size="17" font-weight="bold" fill="#000" stroke="#000" stroke-width="0.45" textLength="11.9" lengthAdjust="spacingAndGlyphs">4</text>
<text x="672.3" y="689.7" font-size="17" font-weight="bold" fill="#000" stroke="#000" stroke-width="0.45" textLength="35.9" lengthAdjust="spacingAndGlyphs">Q14</text>
<text x="696.3" y="702.7" font-size="17" font-weight="bold" fill="#000" stroke="#000" stroke-width="0.45" textLength="11.9" lengthAdjust="spacingAndGlyphs">5</text>
<text x="672.3" y="715.3" font-size="17" font-weight="bold" fill="#000" stroke="#000" stroke-width="0.45" textLength="35.9" lengthAdjust="spacingAndGlyphs">Q15</text>
<rect x="925.5" y="573.5" width="124" height="111" fill="none" stroke="#0000c8"/>
<rect x="985.0" y="571.0" width="5" height="5" fill="none" stroke="#0000ff" stroke-width="1"/>
<rect x="923.0" y="682.0" width="5" height="5" fill="none" stroke="#0000ff" stroke-width="1"/>
<path d="M925.5,610.5 L987.5,610.5 L987.5,647.5 L1062,647.5" fill="none" stroke="#0000ff" stroke-width="1"/>
<circle cx="1055.5" cy="647.5" r="5" fill="none" stroke="#0000c8" stroke-dasharray="2,1.5" shape-rendering="geometricPrecision"/>
<path d="M863,647.5 L925.5,647.5" fill="none" stroke="#0000ff" stroke-width="1"/>
<path d="M925.5,642 L932,647.5 L925.5,653" fill="none" stroke="#0000c8" shape-rendering="geometricPrecision"/>
<path d="M863,672.5 L987.5,672.5 L987.5,684.5" fill="none" stroke="#0000ff" stroke-width="1"/>
<path d="M1049.5,610.5 L1112,610.5" fill="none" stroke="#0000ff" stroke-width="1"/>
<rect x="870" y="625" width="11" height="2" fill="#000"/>
<text x="868.8" y="642.5" font-size="17" font-weight="bold" fill="#000" stroke="#000" stroke-width="0.45" textLength="13.2" lengthAdjust="spacingAndGlyphs">C</text>
<text x="868.8" y="667.5" font-size="17" font-weight="bold" fill="#000" stroke="#000" stroke-width="0.45" textLength="13.4" lengthAdjust="spacingAndGlyphs">R</text>
<text x="930.8" y="616.7" font-size="17" font-weight="bold" fill="#000" stroke="#000" stroke-width="0.45" textLength="13.7" lengthAdjust="spacingAndGlyphs">D</text>
<text x="930.8" y="654.2" font-size="17" font-weight="bold" fill="#000" stroke="#000" stroke-width="0.45" textLength="34.4" lengthAdjust="spacingAndGlyphs">CLK</text>
<text x="969.6" y="593.3" font-size="17" font-weight="bold" fill="#000" stroke="#000" stroke-width="0.45" textLength="34.1" lengthAdjust="spacingAndGlyphs">PRE</text>
<text x="969.6" y="676.7" font-size="17" font-weight="bold" fill="#000" stroke="#000" stroke-width="0.45" textLength="34.9" lengthAdjust="spacingAndGlyphs">CLR</text>
<text x="1087.5" y="605.8" font-size="17" font-weight="bold" fill="#000" stroke="#000" stroke-width="0.45" textLength="23.7" lengthAdjust="spacingAndGlyphs">S0</text>
<text x="1032.6" y="617.5" font-size="17" font-weight="bold" fill="#000" stroke="#000" stroke-width="0.45" textLength="14.4" lengthAdjust="spacingAndGlyphs">Q</text>
<rect x="987.5" y="625" width="23" height="2" fill="#000"/>
<text x="986.8" y="642.8" font-size="17" font-weight="bold" fill="#000" stroke="#000" stroke-width="0.45" textLength="24.4" lengthAdjust="spacingAndGlyphs">S0</text>
<rect x="1033.8" y="636" width="12.5" height="2" fill="#000"/>
<text x="1032.6" y="653.3" font-size="17" font-weight="bold" fill="#000" stroke="#000" stroke-width="0.45" textLength="14.4" lengthAdjust="spacingAndGlyphs">Q</text>
<rect x="1142" y="495" width="6" height="80" fill="url(#streak)"/>
<rect x="0" y="819" width="1152" height="22" fill="#f0f0f0"/>
<rect x="0" y="822" width="1152" height="1" fill="#ffffff"/>
<text x="1100.5" y="836.5" font-size="12" fill="#000" textLength="47.4" lengthAdjust="spacingAndGlyphs" >Alternate</text>
<rect x="1151" y="824" width="1" height="17" fill="#c8c8c8"/>
<rect x="15" y="57" width="2" height="9" fill="#0000ff"/>
<rect x="12" y="61" width="3" height="1" fill="#0000ff"/>
<rect x="17" y="58" width="1" height="1" fill="#0000ff"/>
<rect x="18" y="57" width="1" height="1" fill="#0000ff"/>
<rect x="19" y="56" width="1" height="1" fill="#0000ff"/>
<rect x="20" y="55" width="1" height="1" fill="#0000ff"/>
<rect x="21" y="54" width="1" height="1" fill="#0000ff"/>
<rect x="17" y="64" width="1" height="1" fill="#0000ff"/>
<rect x="18" y="65" width="1" height="1" fill="#0000ff"/>
<rect x="19" y="66" width="1" height="1" fill="#0000ff"/>
<rect x="20" y="67" width="1" height="1" fill="#0000ff"/>
<rect x="21" y="68" width="1" height="1" fill="#0000ff"/>
<rect x="22" y="69" width="1" height="1" fill="#0000ff"/>
<rect x="20" y="65" width="1" height="2" fill="#0000ff"/>
<rect x="18" y="67" width="2" height="1" fill="#0000ff"/>
<rect x="20" y="67" width="2" height="2" fill="#0000ff"/>
<rect x="17" y="463" width="2" height="9" fill="#0000ff"/>
<rect x="14" y="467" width="3" height="1" fill="#0000ff"/>
<rect x="19" y="464" width="1" height="1" fill="#0000ff"/>
<rect x="20" y="463" width="1" height="1" fill="#0000ff"/>
<rect x="21" y="462" width="1" height="1" fill="#0000ff"/>
<rect x="22" y="461" width="1" height="1" fill="#0000ff"/>
<rect x="23" y="460" width="1" height="1" fill="#0000ff"/>
<rect x="19" y="470" width="1" height="1" fill="#0000ff"/>
<rect x="20" y="471" width="1" height="1" fill="#0000ff"/>
<rect x="21" y="472" width="1" height="1" fill="#0000ff"/>
<rect x="22" y="473" width="1" height="1" fill="#0000ff"/>
<rect x="23" y="474" width="1" height="1" fill="#0000ff"/>
<rect x="24" y="475" width="1" height="1" fill="#0000ff"/>
<rect x="22" y="471" width="1" height="2" fill="#0000ff"/>
<rect x="20" y="473" width="2" height="1" fill="#0000ff"/>
<rect x="22" y="473" width="2" height="2" fill="#0000ff"/>
<rect x="212" y="56" width="16" height="16" fill="#cfcac4"/>
<rect x="215" y="56" width="13" height="12" fill="#c0c0c0"/>
<rect x="214" y="56" width="1" height="16" fill="#000"/>
<rect x="212" y="57" width="2" height="1" fill="#000"/>
<rect x="212" y="60" width="2" height="1" fill="#000"/>
<rect x="212" y="63" width="2" height="1" fill="#000"/>
<rect x="212" y="66" width="2" height="1" fill="#000"/>
<rect x="212" y="69" width="16" height="1" fill="#000"/>
<rect x="214" y="70" width="1" height="2" fill="#000"/>
<rect x="217" y="70" width="1" height="2" fill="#000"/>
<rect x="220" y="70" width="1" height="2" fill="#000"/>
<rect x="223" y="70" width="1" height="2" fill="#000"/>
<rect x="226" y="70" width="1" height="2" fill="#000"/>
<path d="M215,64.5 L218,61 L220.5,61 L222.5,64 L224.5,64 L227.5,60" fill="none" stroke="#ff0000" stroke-width="2" shape-rendering="geometricPrecision"/>
<rect x="12" y="90" width="16" height="16" fill="#cfcac4"/>
<rect x="15" y="90" width="13" height="12" fill="#c0c0c0"/>
<rect x="14" y="90" width="1" height="16" fill="#000"/>
<rect x="12" y="91" width="2" height="1" fill="#000"/>
<rect x="12" y="94" width="2" height="1" fill="#000"/>
<rect x="12" y="97" width="2" height="1" fill="#000"/>
<rect x="12" y="100" width="2" height="1" fill="#000"/>
<rect x="12" y="103" width="16" height="1" fill="#000"/>
<rect x="14" y="104" width="1" height="2" fill="#000"/>
<rect x="17" y="104" width="1" height="2" fill="#000"/>
<rect x="20" y="104" width="1" height="2" fill="#000"/>
<rect x="23" y="104" width="1" height="2" fill="#000"/>
<rect x="26" y="104" width="1" height="2" fill="#000"/>
<path d="M15,98.5 L18,95 L20.5,95 L22.5,98 L24.5,98 L27.5,94" fill="none" stroke="#ff0000" stroke-width="2" shape-rendering="geometricPrecision"/>
</svg>
</body></html>
